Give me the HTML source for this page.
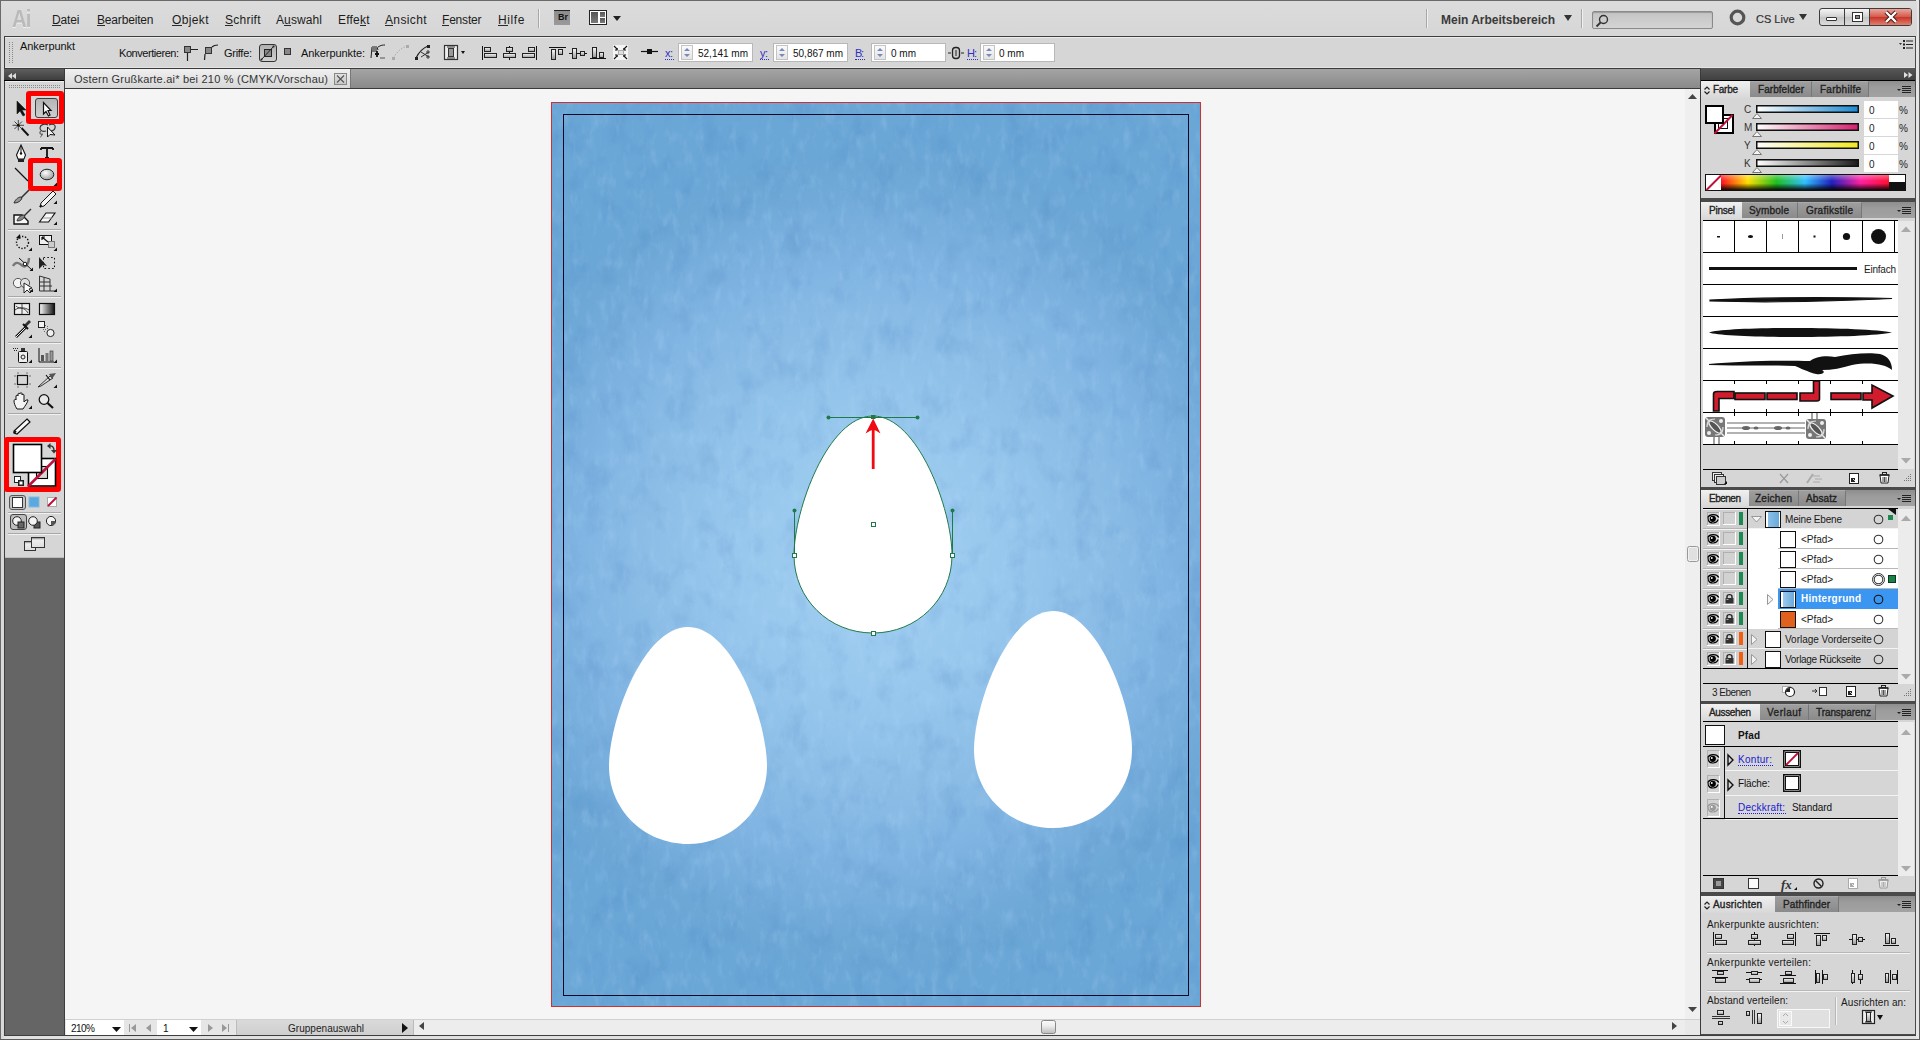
<!DOCTYPE html>
<html><head><meta charset="utf-8"><title>Illustrator</title><style>*{margin:0;padding:0;box-sizing:border-box}
html,body{width:1920px;height:1040px;overflow:hidden}
body{position:relative;background:#d8d8d8;font-family:"Liberation Sans",sans-serif}
.a{position:absolute;display:block}
.t{position:absolute;white-space:nowrap;line-height:1}
svg.a{overflow:visible}</style></head><body>
<div class="a" style="left:0px;top:0px;width:1920px;height:1040px;background:#d8d8d8;"></div>
<div class="a" style="left:0px;top:0px;width:1920px;height:1px;background:#6a6a6a;"></div>
<div class="a" style="left:0px;top:0px;width:1px;height:1040px;background:#6a6a6a;"></div>
<div class="a" style="left:1916px;top:0px;width:3px;height:1040px;background:#e6e6e6;"></div>
<div class="a" style="left:1919px;top:0px;width:1px;height:1040px;background:#5a5a5a;"></div>
<div class="a" style="left:0px;top:1039px;width:1920px;height:1px;background:#5a5a5a;"></div>
<div class="a" style="left:1px;top:1px;width:1916px;height:35px;background:linear-gradient(#dcdcdc,#d6d6d6);"></div>
<div class="t" style="left:12px;top:8px;font-size:23px;font-weight:bold;color:#bababa;letter-spacing:-1px;text-shadow:0 1px 0 #f0f0f0;transform:scaleX(0.88);transform-origin:0 0">Ai</div>
<div class="t " style="left:52px;top:14px;font-size:12px;color:#1c1c1c;letter-spacing:-0.13px;">Datei</div>
<div class="a" style="left:52px;top:25px;width:9px;height:1px;background:#2a2a2a;"></div>
<div class="t " style="left:97px;top:14px;font-size:12px;color:#1c1c1c;letter-spacing:-0.17px;">Bearbeiten</div>
<div class="a" style="left:97px;top:25px;width:8px;height:1px;background:#2a2a2a;"></div>
<div class="t " style="left:172px;top:14px;font-size:12px;color:#1c1c1c;letter-spacing:0.36px;">Objekt</div>
<div class="a" style="left:172px;top:25px;width:10px;height:1px;background:#2a2a2a;"></div>
<div class="t " style="left:225px;top:14px;font-size:12px;color:#1c1c1c;letter-spacing:0.25px;">Schrift</div>
<div class="a" style="left:225px;top:25px;width:8px;height:1px;background:#2a2a2a;"></div>
<div class="t " style="left:276px;top:14px;font-size:12px;color:#1c1c1c;letter-spacing:0.11px;">Auswahl</div>
<div class="a" style="left:284px;top:25px;width:7px;height:1px;background:#2a2a2a;"></div>
<div class="t " style="left:338px;top:14px;font-size:12px;color:#1c1c1c;letter-spacing:0.21px;">Effekt</div>
<div class="a" style="left:360px;top:25px;width:6px;height:1px;background:#2a2a2a;"></div>
<div class="t " style="left:385px;top:14px;font-size:12px;color:#1c1c1c;letter-spacing:0.36px;">Ansicht</div>
<div class="a" style="left:385px;top:25px;width:8px;height:1px;background:#2a2a2a;"></div>
<div class="t " style="left:442px;top:14px;font-size:12px;color:#1c1c1c;letter-spacing:-0.20px;">Fenster</div>
<div class="a" style="left:442px;top:25px;width:7px;height:1px;background:#2a2a2a;"></div>
<div class="t " style="left:498px;top:14px;font-size:12px;color:#1c1c1c;letter-spacing:0.62px;">Hilfe</div>
<div class="a" style="left:498px;top:25px;width:10px;height:1px;background:#2a2a2a;"></div>
<div class="a" style="left:538px;top:9px;width:1px;height:19px;background:#a8a8a8;"></div>
<div class="a" style="left:539px;top:9px;width:1px;height:19px;background:#f0f0f0;"></div>
<div class="a" style="left:554px;top:10px;width:16px;height:15px;background:linear-gradient(#8c8c8c,#9a9a9a);border-top:1.5px solid #222"></div>
<div class="t " style="left:558px;top:13px;font-size:9px;color:#111;font-weight:bold;">Br</div>
<div class="a" style="left:589px;top:10px;width:18px;height:15px;background:#fff;border:1px solid #222"></div>
<div class="a" style="left:591px;top:12px;width:7px;height:11px;background:linear-gradient(#555,#7a7a7a);"></div>
<div class="a" style="left:600px;top:12px;width:5px;height:5px;background:linear-gradient(#555,#7a7a7a);"></div>
<div class="a" style="left:600px;top:18px;width:5px;height:5px;background:linear-gradient(#555,#7a7a7a);"></div>
<svg class="a" style="left:613px;top:16px;" width="8" height="5" viewBox="0 0 8 5"><path d="M0 0H8L4 5Z" fill="#222"/></svg>
<div class="a" style="left:1426px;top:9px;width:1px;height:19px;background:#a8a8a8;"></div>
<div class="a" style="left:1427px;top:9px;width:1px;height:19px;background:#f0f0f0;"></div>
<div class="t " style="left:1441px;top:14px;font-size:12px;color:#3a3a3a;font-weight:bold;letter-spacing:-0.01px;">Mein Arbeitsbereich</div>
<svg class="a" style="left:1564px;top:15px;" width="8" height="6" viewBox="0 0 8 6"><path d="M0 0H8L4 6Z" fill="#333"/></svg>
<div class="a" style="left:1581px;top:9px;width:1px;height:19px;background:#a8a8a8;"></div>
<div class="a" style="left:1582px;top:9px;width:1px;height:19px;background:#f0f0f0;"></div>
<div class="a" style="left:1592px;top:11px;width:121px;height:18px;background:linear-gradient(#c4c4c4,#d4d4d4);border:1px solid #8a8a8a;border-radius:2px;box-shadow:inset 0 1px 1px #999"></div>
<svg class="a" style="left:1595px;top:14px;" width="14" height="14" viewBox="0 0 14 14"><circle cx="8.5" cy="5.5" r="4" fill="none" stroke="#333" stroke-width="1.4"/><path d="M5.5 8.5L1.5 12.5" stroke="#333" stroke-width="1.8"/></svg>
<svg class="a" style="left:1729px;top:9px;" width="17" height="17" viewBox="0 0 17 17"><circle cx="8.5" cy="8.5" r="6.3" fill="none" stroke="#555" stroke-width="3.2"/></svg>
<div class="t " style="left:1756px;top:14px;font-size:11px;color:#333;-webkit-text-stroke:0.2px #333">CS Live</div>
<svg class="a" style="left:1799px;top:14px;" width="8" height="6" viewBox="0 0 8 6"><path d="M0 0H8L4 6Z" fill="#333"/></svg>
<div class="a" style="left:1819px;top:8px;width:93px;height:18px;background:linear-gradient(#f4f4f4,#d0d0d0 50%,#c4c4c4 51%,#dcdcdc);border:1px solid #3c3c3c;border-radius:3px"></div>
<div class="a" style="left:1844px;top:9px;width:1px;height:16px;background:#3c3c3c;"></div>
<div class="a" style="left:1869px;top:9px;width:1px;height:16px;background:#3c3c3c;"></div>
<div class="a" style="left:1870px;top:9px;width:41px;height:16px;background:linear-gradient(#eaa69c,#d4584a 50%,#c8342a 51%,#e0806e);border-radius:0 2px 2px 0"></div>
<div class="a" style="left:1826px;top:17px;width:11px;height:4px;background:#fff;border:1px solid #333;border-radius:1px"></div>
<div class="a" style="left:1852px;top:12px;width:11px;height:10px;background:#fff;border:1px solid #333"></div>
<div class="a" style="left:1855px;top:15px;width:5px;height:4px;background:#888;border:1px solid #333"></div>
<svg class="a" style="left:1884px;top:11px;" width="14" height="12" viewBox="0 0 14 12"><path d="M2 1L12 11M12 1L2 11" stroke="#3a1a1a" stroke-width="4.2"/><path d="M2 1L12 11M12 1L2 11" stroke="#fff" stroke-width="2.4"/></svg>
<div class="a" style="left:4px;top:36px;width:1912px;height:32px;background:#d6d6d6;border-top:1px solid #3e3e3e;border-left:1px solid #3e3e3e;border-right:1px solid #4a4a4a"></div>
<div class="a" style="left:5px;top:37px;width:1910px;height:1px;background:#ececec;"></div>
<div class="a" style="left:5px;top:67px;width:1910px;height:1px;background:#e4e4e4;"></div>
<svg class="a" style="left:9px;top:42px;" width="4" height="22" viewBox="0 0 4 22"><rect x="0" y="0" width="1" height="1" fill="#888"/><rect x="0" y="2" width="1" height="1" fill="#888"/><rect x="0" y="4" width="1" height="1" fill="#888"/><rect x="0" y="6" width="1" height="1" fill="#888"/><rect x="0" y="8" width="1" height="1" fill="#888"/><rect x="0" y="10" width="1" height="1" fill="#888"/><rect x="0" y="12" width="1" height="1" fill="#888"/><rect x="0" y="14" width="1" height="1" fill="#888"/><rect x="0" y="16" width="1" height="1" fill="#888"/><rect x="0" y="18" width="1" height="1" fill="#888"/><rect x="0" y="20" width="1" height="1" fill="#888"/><rect x="3" y="0" width="1" height="1" fill="#888"/><rect x="3" y="2" width="1" height="1" fill="#888"/><rect x="3" y="4" width="1" height="1" fill="#888"/><rect x="3" y="6" width="1" height="1" fill="#888"/><rect x="3" y="8" width="1" height="1" fill="#888"/><rect x="3" y="10" width="1" height="1" fill="#888"/><rect x="3" y="12" width="1" height="1" fill="#888"/><rect x="3" y="14" width="1" height="1" fill="#888"/><rect x="3" y="16" width="1" height="1" fill="#888"/><rect x="3" y="18" width="1" height="1" fill="#888"/><rect x="3" y="20" width="1" height="1" fill="#888"/></svg>
<div class="t " style="left:20px;top:41px;font-size:11px;color:#111;letter-spacing:-0.07px;">Ankerpunkt</div>
<div class="t " style="left:119px;top:48px;font-size:11px;color:#111;letter-spacing:-0.45px;">Konvertieren:</div>
<div class="t " style="left:224px;top:48px;font-size:11px;color:#111;letter-spacing:-0.29px;">Griffe:</div>
<div class="t " style="left:301px;top:48px;font-size:11px;color:#111;letter-spacing:-0.07px;">Ankerpunkte:</div>
<div class="t " style="left:665px;top:48px;font-size:11px;color:#3030c0;letter-spacing:-0.56px;">x:</div>
<div class="a" style="left:665px;top:59px;width:9px;height:1px;background:transparent;border-bottom:1px dotted #3030c0"></div>
<div class="t " style="left:760px;top:48px;font-size:11px;color:#3030c0;letter-spacing:-0.56px;">y:</div>
<div class="a" style="left:760px;top:59px;width:9px;height:1px;background:transparent;border-bottom:1px dotted #3030c0"></div>
<div class="t " style="left:855px;top:48px;font-size:11px;color:#3030c0;letter-spacing:-1.39px;">B:</div>
<div class="a" style="left:855px;top:59px;width:10px;height:1px;background:transparent;border-bottom:1px dotted #3030c0"></div>
<div class="t " style="left:967px;top:48px;font-size:11px;color:#3030c0;letter-spacing:-1.00px;">H:</div>
<div class="a" style="left:967px;top:59px;width:11px;height:1px;background:transparent;border-bottom:1px dotted #3030c0"></div>
<div class="a" style="left:678px;top:43px;width:75px;height:19px;background:#fff;border:1px solid #b8b8b8"></div>
<div class="a" style="left:681px;top:45px;width:12px;height:15px;background:linear-gradient(#fafafa,#e4e4e4);border:1px solid #c4c4c4"></div>
<svg class="a" style="left:683px;top:47px;" width="8" height="11" viewBox="0 0 8 11"><path d="M1 4L4 1L7 4Z M1 7L4 10L7 7Z" fill="#7a8ab8"/></svg>
<div class="t " style="left:698px;top:49px;font-size:10px;color:#111;">52,141 mm</div>
<div class="a" style="left:773px;top:43px;width:75px;height:19px;background:#fff;border:1px solid #b8b8b8"></div>
<div class="a" style="left:776px;top:45px;width:12px;height:15px;background:linear-gradient(#fafafa,#e4e4e4);border:1px solid #c4c4c4"></div>
<svg class="a" style="left:778px;top:47px;" width="8" height="11" viewBox="0 0 8 11"><path d="M1 4L4 1L7 4Z M1 7L4 10L7 7Z" fill="#7a8ab8"/></svg>
<div class="t " style="left:793px;top:49px;font-size:10px;color:#111;">50,867 mm</div>
<div class="a" style="left:871px;top:43px;width:75px;height:19px;background:#fff;border:1px solid #b8b8b8"></div>
<div class="a" style="left:874px;top:45px;width:12px;height:15px;background:linear-gradient(#fafafa,#e4e4e4);border:1px solid #c4c4c4"></div>
<svg class="a" style="left:876px;top:47px;" width="8" height="11" viewBox="0 0 8 11"><path d="M1 4L4 1L7 4Z M1 7L4 10L7 7Z" fill="#7a8ab8"/></svg>
<div class="t " style="left:891px;top:49px;font-size:10px;color:#111;">0 mm</div>
<div class="a" style="left:980px;top:43px;width:75px;height:19px;background:#fff;border:1px solid #b8b8b8"></div>
<div class="a" style="left:983px;top:45px;width:12px;height:15px;background:linear-gradient(#fafafa,#e4e4e4);border:1px solid #c4c4c4"></div>
<svg class="a" style="left:985px;top:47px;" width="8" height="11" viewBox="0 0 8 11"><path d="M1 4L4 1L7 4Z M1 7L4 10L7 7Z" fill="#7a8ab8"/></svg>
<div class="t " style="left:999px;top:49px;font-size:10px;color:#111;">0 mm</div>
<svg class="a" style="left:1899px;top:40px;" width="15" height="9" viewBox="0 0 15 9"><path d="M0 3H3L1.5 5Z" fill="#333"/><rect x="4" y="0" width="2" height="2" fill="#222"/><rect x="4" y="3.5" width="2" height="2" fill="#222"/><rect x="4" y="7" width="2" height="2" fill="#222"/><rect x="7" y="0.5" width="7" height="1" fill="#222"/><rect x="7" y="4" width="7" height="1" fill="#222"/><rect x="7" y="7.5" width="7" height="1" fill="#222"/></svg>
<svg class="a" style="left:0;top:0" width="1000" height="70"><defs><linearGradient id="cbg" x1="0" y1="0" x2="0" y2="1"><stop offset="0" stop-color="#fafafa"/><stop offset="1" stop-color="#999"/></linearGradient><linearGradient id="cbsel" x1="0" y1="0" x2="0" y2="1"><stop offset="0" stop-color="#b0b0b0"/><stop offset="1" stop-color="#d0d0d0"/></linearGradient></defs><rect x="184.5" y="46.5" width="6" height="6" fill="#888" stroke="#333"/><path d="M187.5 53V61M191 49.5H198" stroke="#222" stroke-width="1.2"/><rect x="205.5" y="47.5" width="6" height="6" fill="#888" stroke="#333"/><path d="M205 54L204.5 60M212 47C214 45 216 45 218 45" stroke="#222" stroke-width="1.2" fill="none"/><rect x="259.5" y="44.5" width="17" height="17" rx="2.5" fill="url(#cbsel)" stroke="#333"/><rect x="264.5" y="49.5" width="7" height="7" fill="#888" stroke="#222"/><path d="M261 60L274 46" stroke="#222"/><circle cx="261.5" cy="59.5" r="1" fill="#222"/><circle cx="273.5" cy="46.5" r="1" fill="#222"/><rect x="284.5" y="48.5" width="6" height="6" fill="#888" stroke="#333"/><path d="M371 58L372 47H377L378 50" fill="none" stroke="#222" stroke-width="1"/><rect x="372" y="47" width="5" height="5" fill="#777"/><path d="M378 47C381 45 383 45 385 45" stroke="#222" fill="none"/><path d="M377 51V57M375 54H379" stroke="#111" stroke-width="1.8"/><path d="M380 58H385" stroke="#555"/><path d="M393 58C397 52 401 48 407 46" fill="none" stroke="#aaa" stroke-dasharray="1.5 1.5"/><rect x="392" y="57" width="3" height="3" fill="#aaa"/><rect x="406" y="45" width="3" height="3" fill="#aaa"/><path d="M416 58C419 52 423 48 428 46" fill="none" stroke="#222" stroke-width="1.2"/><rect x="415" y="57" width="3" height="3" fill="#222"/><rect x="427" y="45" width="3" height="3" fill="#222"/><path d="M421 52L429 57M421 57L429 52" stroke="#333"/><circle cx="428" cy="52" r="1.2" fill="none" stroke="#333"/><circle cx="428" cy="57" r="1.2" fill="none" stroke="#333"/><rect x="444.5" y="45.5" width="13" height="14" fill="#eee" stroke="#333" stroke-width="1.2"/><rect x="448.5" y="48.5" width="5" height="8" fill="#999" stroke="#333"/><path d="M447 47H455M447 58H455" stroke="#333"/><path d="M461 51H465L463 54Z" fill="#111"/><path d="M482.5 46V60" stroke="#111"/><rect x="484.5" y="47.5" width="6" height="4" fill="url(#cbg)" stroke="#222" stroke-width="1"/><rect x="484.5" y="53.5" width="12" height="4" fill="url(#cbg)" stroke="#222" stroke-width="1"/><path d="M509.5 46V60" stroke="#111"/><rect x="506.5" y="47.5" width="6" height="4" fill="url(#cbg)" stroke="#222" stroke-width="1"/><rect x="503.5" y="53.5" width="12" height="4" fill="url(#cbg)" stroke="#222" stroke-width="1"/><path d="M536.5 46V60" stroke="#111"/><rect x="528.5" y="47.5" width="6" height="4" fill="url(#cbg)" stroke="#222" stroke-width="1"/><rect x="522.5" y="53.5" width="12" height="4" fill="url(#cbg)" stroke="#222" stroke-width="1"/><path d="M549 47.5H566" stroke="#111"/><rect x="551.5" y="49.5" width="4" height="10" fill="url(#cbg)" stroke="#222" stroke-width="1"/><rect x="558.5" y="49.5" width="4" height="5" fill="url(#cbg)" stroke="#222" stroke-width="1"/><path d="M569 53.5H587" stroke="#111"/><rect x="572.5" y="48.5" width="4" height="10" fill="url(#cbg)" stroke="#222" stroke-width="1"/><rect x="580.5" y="51.5" width="4" height="4" fill="url(#cbg)" stroke="#222" stroke-width="1"/><path d="M590 58.5H606" stroke="#111"/><rect x="592.5" y="47.5" width="4" height="10" fill="url(#cbg)" stroke="#222" stroke-width="1"/><rect x="599.5" y="52.5" width="4" height="5" fill="url(#cbg)" stroke="#222" stroke-width="1"/><rect x="613" y="45" width="15" height="15" fill="#f4f4f4"/><g stroke="#111" stroke-width="1.1" fill="none"><path d="M614 46L617.5 49.5M627 46L623.5 49.5M614 59L617.5 55.5M627 59L623.5 55.5"/><path d="M617 48V50H615M624 48V50H626M617 57V55H615M624 57V55H626"/></g><rect x="618.5" y="50.5" width="5" height="4" fill="#e0e0e0" stroke="#aaa"/><path d="M641 51.5H658" stroke="#111" stroke-width="1.2"/><rect x="647" y="49" width="5" height="5" fill="#111"/><path d="M948 53H951M961 53H964" stroke="#222"/><rect x="952.5" y="47.5" width="7" height="11" rx="3" fill="#ccc" stroke="#222" stroke-width="1.3"/><path d="M956 50V56" stroke="#222"/></svg>
<div class="a" style="left:4px;top:68px;width:1696px;height:1px;background:#3a3a3a;"></div>
<div class="a" style="left:4px;top:69px;width:61px;height:11px;background:linear-gradient(#5e5e5e,#3e3e3e);"></div>
<div class="a" style="left:4px;top:80px;width:61px;height:1px;background:#000;"></div>
<svg class="a" style="left:8px;top:73px;" width="8" height="6" viewBox="0 0 8 6"><path d="M4 0V6L0 3Z M8 0V6L4 3Z" fill="#ddd"/></svg>
<div class="a" style="left:65px;top:69px;width:1635px;height:19px;background:linear-gradient(#a4a4a4,#8a8a8a);"></div>
<div class="a" style="left:64px;top:68px;width:1px;height:21px;background:#3a3a3a;"></div>
<div class="a" style="left:65px;top:88px;width:1635px;height:1px;background:#3a3a3a;"></div>
<div class="a" style="left:65px;top:69px;width:286px;height:19px;background:linear-gradient(#f0f0f0,#d8d8d8);border-right:1px solid #777"></div>
<div class="t " style="left:74px;top:74px;font-size:11px;color:#333;letter-spacing:0.21px;">Ostern Grußkarte.ai* bei 210 % (CMYK/Vorschau)</div>
<div class="a" style="left:334px;top:73px;width:13px;height:12px;background:linear-gradient(#e0e0e0,#c8c8c8);border:1px solid #888"></div>
<svg class="a" style="left:336px;top:75px;" width="9" height="8" viewBox="0 0 9 8"><path d="M1 0.5L8 7.5M8 0.5L1 7.5" stroke="#555" stroke-width="1.1"/></svg>
<div class="a" style="left:4px;top:81px;width:61px;height:954px;background:#656565;border-left:1px solid #3e3e3e;border-right:1px solid #3e3e3e"></div>
<div class="a" style="left:5px;top:81px;width:59px;height:477px;background:#d6d6d6;"></div>
<div class="a" style="left:5px;top:81px;width:59px;height:1px;background:#efefef;"></div>
<div class="a" style="left:5px;top:557px;width:59px;height:1px;background:#bdbdbd;"></div>
<svg class="a" style="left:0;top:0" width="70" height="560"><defs><linearGradient id="selg" x1="0" y1="0" x2="0" y2="1"><stop offset="0" stop-color="#b4b4b4"/><stop offset="1" stop-color="#cfcfcf"/></linearGradient>
<radialGradient id="ellg" cx="0.4" cy="0.35" r="0.7"><stop offset="0" stop-color="#fff"/><stop offset="1" stop-color="#999"/></radialGradient>
<linearGradient id="gradg"><stop offset="0" stop-color="#fff"/><stop offset="1" stop-color="#111"/></linearGradient>
<linearGradient id="scrg" x1="0" y1="0" x2="0" y2="1"><stop offset="0" stop-color="#777"/><stop offset="0.25" stop-color="#eee"/><stop offset="1" stop-color="#ddd"/></linearGradient></defs><rect x="9" y="85" width="1" height="1" fill="#8a8a8a"/><rect x="9" y="87" width="1" height="1" fill="#8a8a8a"/><rect x="11" y="85" width="1" height="1" fill="#8a8a8a"/><rect x="11" y="87" width="1" height="1" fill="#8a8a8a"/><rect x="13" y="85" width="1" height="1" fill="#8a8a8a"/><rect x="13" y="87" width="1" height="1" fill="#8a8a8a"/><rect x="15" y="85" width="1" height="1" fill="#8a8a8a"/><rect x="15" y="87" width="1" height="1" fill="#8a8a8a"/><rect x="17" y="85" width="1" height="1" fill="#8a8a8a"/><rect x="17" y="87" width="1" height="1" fill="#8a8a8a"/><rect x="19" y="85" width="1" height="1" fill="#8a8a8a"/><rect x="19" y="87" width="1" height="1" fill="#8a8a8a"/><rect x="21" y="85" width="1" height="1" fill="#8a8a8a"/><rect x="21" y="87" width="1" height="1" fill="#8a8a8a"/><rect x="23" y="85" width="1" height="1" fill="#8a8a8a"/><rect x="23" y="87" width="1" height="1" fill="#8a8a8a"/><rect x="25" y="85" width="1" height="1" fill="#8a8a8a"/><rect x="25" y="87" width="1" height="1" fill="#8a8a8a"/><rect x="27" y="85" width="1" height="1" fill="#8a8a8a"/><rect x="27" y="87" width="1" height="1" fill="#8a8a8a"/><rect x="29" y="85" width="1" height="1" fill="#8a8a8a"/><rect x="29" y="87" width="1" height="1" fill="#8a8a8a"/><rect x="31" y="85" width="1" height="1" fill="#8a8a8a"/><rect x="31" y="87" width="1" height="1" fill="#8a8a8a"/><rect x="33" y="85" width="1" height="1" fill="#8a8a8a"/><rect x="33" y="87" width="1" height="1" fill="#8a8a8a"/><rect x="35" y="85" width="1" height="1" fill="#8a8a8a"/><rect x="35" y="87" width="1" height="1" fill="#8a8a8a"/><rect x="37" y="85" width="1" height="1" fill="#8a8a8a"/><rect x="37" y="87" width="1" height="1" fill="#8a8a8a"/><rect x="39" y="85" width="1" height="1" fill="#8a8a8a"/><rect x="39" y="87" width="1" height="1" fill="#8a8a8a"/><rect x="41" y="85" width="1" height="1" fill="#8a8a8a"/><rect x="41" y="87" width="1" height="1" fill="#8a8a8a"/><rect x="43" y="85" width="1" height="1" fill="#8a8a8a"/><rect x="43" y="87" width="1" height="1" fill="#8a8a8a"/><rect x="45" y="85" width="1" height="1" fill="#8a8a8a"/><rect x="45" y="87" width="1" height="1" fill="#8a8a8a"/><rect x="47" y="85" width="1" height="1" fill="#8a8a8a"/><rect x="47" y="87" width="1" height="1" fill="#8a8a8a"/><rect x="49" y="85" width="1" height="1" fill="#8a8a8a"/><rect x="49" y="87" width="1" height="1" fill="#8a8a8a"/><rect x="51" y="85" width="1" height="1" fill="#8a8a8a"/><rect x="51" y="87" width="1" height="1" fill="#8a8a8a"/><rect x="53" y="85" width="1" height="1" fill="#8a8a8a"/><rect x="53" y="87" width="1" height="1" fill="#8a8a8a"/><rect x="55" y="85" width="1" height="1" fill="#8a8a8a"/><rect x="55" y="87" width="1" height="1" fill="#8a8a8a"/><rect x="57" y="85" width="1" height="1" fill="#8a8a8a"/><rect x="57" y="87" width="1" height="1" fill="#8a8a8a"/><rect x="59" y="85" width="1" height="1" fill="#8a8a8a"/><rect x="59" y="87" width="1" height="1" fill="#8a8a8a"/><rect x="35.5" y="98.5" width="22" height="19" rx="2.5" fill="url(#selg)" stroke="#3c3c3c"/><path d="M17 101L17 114L20 111L23 116L25 115L22 110L26 110Z" fill="#111" stroke="#222" stroke-width="0.6"/><path d="M43.5 102.5L43.5 114L46 111.5L48.5 116L50 115L48 110.5L51 110.5Z" fill="#fff" stroke="#111" stroke-width="1.2"/><path d="M21.5 128L28.5 135.5" stroke="#111" stroke-width="1.9"/><g stroke="#333" stroke-width="0.9"><path d="M18.3 120V130.5M12.5 125.3H24M14.5 121.5L22 129M22 121.5L14.5 129"/></g><circle cx="18.3" cy="125.3" r="1.3" fill="#111"/><path d="M48 125C44 123 40 125 40 128C40 131 43 132 46 131M49 125C53 123 56 125 55 128C54.5 130 52 131 50 131" fill="none" stroke="#333" stroke-width="1.1"/><path d="M40.5 131C39.5 133 40 135 42 134C43 133 41.5 136.5 40.5 137" fill="none" stroke="#333" stroke-width="1"/><path d="M47.5 127V137L50 134.5L55 135Z" fill="#eee" stroke="#111" stroke-width="1"/><rect x="8" y="141" width="53" height="1" fill="#a8a8a8"/><rect x="8" y="142" width="53" height="1" fill="#f2f2f2"/><path d="M21 145L25.5 155L24 159H18L16.5 155Z" fill="#fff" stroke="#111" stroke-width="1.1"/><path d="M21 146V153" stroke="#111"/><circle cx="21" cy="153.5" r="1.2" fill="#111"/><rect x="18" y="159" width="6" height="3" fill="#222"/><path d="M41 148H53M41 148V150M53 148V150M47 148V158M45 158H49" stroke="#111" stroke-width="1.8" fill="none"/><path d="M15 168L28 181" stroke="#111" stroke-width="1.2"/><ellipse cx="47" cy="174.5" rx="6.8" ry="5.3" fill="url(#ellg)" stroke="#222" stroke-width="1"/><path d="M57 186h-3.5l3.5-3.5z" fill="#111"/><path d="M29 190L20 199" stroke="#333" stroke-width="1.6"/><path d="M21 197C18 197 15 200 14 203C18 203 21 201 22 198Z" fill="#999" stroke="#222" stroke-width="0.9"/><path d="M53 191L56 194L44 206L40 207L41 203Z" fill="#f4f4f4" stroke="#111" stroke-width="1"/><path d="M40 207L41.5 205" stroke="#111" stroke-width="1.5"/><path d="M57 204h-3.5l3.5-3.5z" fill="#111"/><path d="M14 215H22L28 221V224H14Z" fill="#f6f6f6" stroke="#111" stroke-width="1.4"/><path d="M31 209L23 217" stroke="#333" stroke-width="1.4"/><path d="M24 215C20 215 17 219 17 221C21 221 24 219 25 216Z" fill="#888" stroke="#222" stroke-width="0.8"/><path d="M39.5 222L46 213H55L48.5 222Z" fill="#f8f8f8" stroke="#111" stroke-width="1.1"/><path d="M43 218H52" stroke="#999"/><path d="M57 225h-3.5l3.5-3.5z" fill="#111"/><rect x="8" y="229" width="53" height="1" fill="#a8a8a8"/><rect x="8" y="230" width="53" height="1" fill="#f2f2f2"/><circle cx="22.5" cy="242.5" r="6" fill="none" stroke="#111" stroke-width="1.4" stroke-dasharray="1.4 1.6"/><path d="M16 238L20 234L20.5 239Z" fill="#111"/><path d="M32 251h-3.5l3.5-3.5z" fill="#111"/><rect x="39.5" y="235.5" width="12" height="9" fill="#f0f0f0" stroke="#111"/><rect x="48.5" y="241.5" width="6" height="6" fill="#ccc" stroke="#777"/><path d="M42 237L48 242M42 237v3M42 237h3" stroke="#111" stroke-width="1.2" fill="none"/><path d="M57 251h-3.5l3.5-3.5z" fill="#111"/><path d="M13 266C16 260 20 264 23 266C26 268 29 263 29 258" fill="none" stroke="#777" stroke-width="2.4"/><path d="M19 258L32 270" stroke="#111" stroke-width="1"/><circle cx="25" cy="264" r="1.8" fill="#fff" stroke="#111"/><path d="M33 271h-3.5l3.5-3.5z" fill="#111"/><rect x="43.5" y="257.5" width="11" height="11" fill="none" stroke="#111" stroke-dasharray="1.6 2.2"/><path d="M39 257V269L43 265L47 266Z" fill="#222"/><circle cx="18" cy="283" r="4.6" fill="#f4f4f4" stroke="#555"/><circle cx="25" cy="283" r="4.6" fill="#e0e0e0" stroke="#555"/><path d="M24 283V293L27 290L30 293L31 292L29 289L32 288Z" fill="#fff" stroke="#111" stroke-width="0.9"/><path d="M33 292h-3.5l3.5-3.5z" fill="#111"/><path d="M39.5 276V291H56M39.5 276L50 279V291M44 277.5V291M39.5 282H50M39.5 286H52" fill="none" stroke="#333" stroke-width="1"/><path d="M57 292h-3.5l3.5-3.5z" fill="#111"/><rect x="8" y="296" width="53" height="1" fill="#a8a8a8"/><rect x="8" y="297" width="53" height="1" fill="#f2f2f2"/><rect x="14.5" y="303.5" width="15" height="11" fill="#f0f0f0" stroke="#111" stroke-width="1.2"/><path d="M15 310C19 307 24 307 29 310M22 304V314M16 306C20 310 24 306 28 313" fill="none" stroke="#333" stroke-width="0.9"/><rect x="39.5" y="303.5" width="15" height="11" fill="url(#gradg)" stroke="#111" stroke-width="1.2"/><path d="M16 337L26 327" stroke="#111" stroke-width="2.6"/><path d="M16 337L26 327" stroke="#eee" stroke-width="1"/><path d="M24 325L29 320L31 322L26 327Z" fill="#333"/><path d="M23 324L28 329" stroke="#111" stroke-width="2"/><path d="M32 338h-3.5l3.5-3.5z" fill="#111"/><rect x="38.5" y="321.5" width="6" height="6" fill="#f2f2f2" stroke="#222"/><circle cx="50.5" cy="333" r="3.6" fill="#f0f0f0" stroke="#222"/><g fill="#666"><rect x="45" y="325" width="1" height="1"/><rect x="47" y="326" width="1" height="1"/><rect x="43" y="329" width="1" height="1"/><rect x="45" y="329" width="1" height="1"/><rect x="47" y="328" width="1" height="1"/><rect x="44" y="331" width="1" height="1"/></g><rect x="8" y="342" width="53" height="1" fill="#a8a8a8"/><rect x="8" y="343" width="53" height="1" fill="#f2f2f2"/><rect x="18.5" y="351.5" width="9" height="11" rx="1" fill="#eee" stroke="#111"/><rect x="21" y="348" width="4" height="3" fill="#333"/><circle cx="23" cy="357" r="2" fill="none" stroke="#222"/><g fill="#222"><rect x="13" y="348" width="1" height="1"/><rect x="15" y="348" width="1" height="1"/><rect x="17" y="348" width="1" height="1"/><rect x="14" y="350" width="1" height="1"/><rect x="16" y="350" width="1" height="1"/></g><path d="M32 363h-3.5l3.5-3.5z" fill="#111"/><path d="M39 348V362H54" fill="none" stroke="#111" stroke-width="1"/><rect x="41" y="355" width="3" height="6" fill="#555"/><rect x="45.5" y="353" width="3" height="8" fill="#777"/><rect x="50" y="351" width="3" height="10" fill="#999" stroke="#333" stroke-width="0.6"/><path d="M57 363h-3.5l3.5-3.5z" fill="#111"/><rect x="8" y="367" width="53" height="1" fill="#a8a8a8"/><rect x="8" y="368" width="53" height="1" fill="#f2f2f2"/><rect x="17.5" y="375.5" width="10" height="9" fill="none" stroke="#111" stroke-width="1.2"/><path d="M14 376h2M14 384h2M29 376h2M29 384h2M18 372v2M27 372v2M18 386v2M27 386v2" stroke="#777"/><path d="M38 387L50 376L53 378L41 386Z" fill="#ddd" stroke="#222" stroke-width="0.9"/><path d="M49 374L56 373L52 379Z" fill="#555"/><path d="M46 375L50 380" stroke="#111" stroke-width="1.2"/><path d="M57 388h-3.5l3.5-3.5z" fill="#111"/><path d="M16 400V396C16 395 18 395 18 396V394C18 393 20 393 20 394V393.5C20 392.5 22 392.5 22 393.5V395C22 394 24 394 24 395V402C25 401 27 399 28 400C28 402 25 406 23 409H17C15 406 14 403 14 401C14 399 16 399 16 400Z" fill="#f4f4f4" stroke="#111" stroke-width="1"/><path d="M32 409h-3.5l3.5-3.5z" fill="#111"/><circle cx="44" cy="399.5" r="4.8" fill="#e8e8e8" stroke="#111" stroke-width="1.3"/><path d="M47.5 403L53 408" stroke="#111" stroke-width="2.2"/><rect x="8" y="413" width="53" height="1" fill="#a8a8a8"/><rect x="8" y="414" width="53" height="1" fill="#f2f2f2"/><path d="M27 419L30 422L17 434L14 433L14 431Z" fill="#fafafa" stroke="#111" stroke-width="1.2"/><path d="M14 433L16 431" stroke="#111" stroke-width="2"/><rect x="6.5" y="439.5" width="52" height="50" rx="0.8" fill="none" stroke="#ff0000" stroke-width="5"/><rect x="28.5" y="458.5" width="27" height="27.5" fill="#fff" stroke="#000" stroke-width="1.6"/><rect x="36.5" y="466.5" width="11" height="12" fill="#d6d6d6" stroke="#000" stroke-width="1.1"/><path d="M28 486.5L55.5 459" stroke="#c0103a" stroke-width="2.5"/><rect x="13.5" y="444.5" width="28" height="28" fill="#fff" stroke="#000" stroke-width="1.6"/><path d="M49.5 446C52.5 445.5 54 447.5 54 450.5" fill="none" stroke="#333" stroke-width="1.4"/><path d="M47 446L50.5 443V449Z" fill="#333"/><path d="M51 450H57L54 453.5Z" fill="#333"/><rect x="14.5" y="476.5" width="6" height="6" fill="#fff" stroke="#222"/><rect x="18" y="480" width="6" height="6" fill="#222"/><rect x="19.5" y="481.5" width="3" height="3" fill="#fff"/><rect x="9.5" y="495.5" width="16" height="14" rx="2.5" fill="#c4c4c4" stroke="#555"/><rect x="12.5" y="497.5" width="10" height="10" fill="#fff" stroke="#333"/><rect x="29" y="497" width="10" height="10" fill="#5aa8e0" stroke="#8ab8d8"/><rect x="47.5" y="497.5" width="9" height="9" fill="#fff" stroke="#aaa"/><path d="M48 506L56.5 497.5" stroke="#c0103a" stroke-width="2"/><rect x="8" y="512" width="53" height="1" fill="#a8a8a8"/><rect x="8" y="513" width="53" height="1" fill="#f2f2f2"/><rect x="10.5" y="514.5" width="16" height="15" rx="2.5" fill="#bcbcbc" stroke="#444"/><circle cx="17" cy="521" r="4.3" fill="#f4f4f4" stroke="#222"/><rect x="18" y="522" width="6" height="6" fill="#666" stroke="#222"/><rect x="34" y="522" width="6" height="6" fill="#555" stroke="#222"/><circle cx="33" cy="521" r="4.3" fill="#f4f4f4" stroke="#222"/><circle cx="51" cy="521" r="4.6" fill="#f4f4f4" stroke="#222"/><path d="M51 521H55.6A4.6 4.6 0 0 1 51 525.6Z" fill="#555"/><rect x="8" y="533" width="53" height="1" fill="#a8a8a8"/><rect x="8" y="534" width="53" height="1" fill="#f2f2f2"/><rect x="24.5" y="541.5" width="11" height="9" fill="url(#scrg)" stroke="#333"/><rect x="31.5" y="537.5" width="13" height="10" fill="url(#scrg)" stroke="#333"/><rect x="28.5" y="93.5" width="33" height="28" rx="0.8" fill="none" stroke="#ff0000" stroke-width="5"/><rect x="30.5" y="160.5" width="29" height="28" rx="0.8" fill="none" stroke="#ff0000" stroke-width="5"/></svg>
<div class="a" style="left:65px;top:89px;width:1620px;height:930px;background:#f5f5f5;"></div>
<svg class="a" style="left:540px;top:90px;" width="680" height="925" viewBox="0 0 680 925"><defs>
<radialGradient id="bg" cx="333" cy="470" r="420" gradientUnits="userSpaceOnUse">
<stop offset="0" stop-color="#a2cff3"/><stop offset="0.26" stop-color="#9ac9ee"/><stop offset="0.36" stop-color="#96c6ec"/><stop offset="0.62" stop-color="#86b9e4"/><stop offset="0.70" stop-color="#80b4e2"/><stop offset="0.93" stop-color="#6ca7d6"/><stop offset="1" stop-color="#6aa6d6"/></radialGradient>
<filter id="tx" x="0" y="0" width="100%" height="100%" color-interpolation-filters="sRGB"><feTurbulence type="fractalNoise" baseFrequency="0.045 0.03" numOctaves="5" seed="11"/><feColorMatrix values="0 0 0 0 0.2  0 0 0 0 0.42  0 0 0 0 0.7  1.8 0 0 0 -0.9"/></filter>
<filter id="tx2" x="0" y="0" width="100%" height="100%" color-interpolation-filters="sRGB"><feTurbulence type="fractalNoise" baseFrequency="0.12 0.05" numOctaves="4" seed="3"/><feColorMatrix values="0 0 0 0 0.75  0 0 0 0 0.88  0 0 0 0 1  0 1.8 0 0 -0.92"/></filter>
</defs>
<rect x="11.5" y="12.5" width="649" height="904" fill="url(#bg)" stroke="#d03030" stroke-width="1"/>
<rect x="12" y="13" width="648" height="903" fill="#000" filter="url(#tx)" opacity="0.2"/><rect x="12" y="13" width="648" height="903" fill="#000" filter="url(#tx2)" opacity="0.25"/>
<rect x="23.5" y="24.5" width="625" height="881" fill="none" stroke="#0a0a28" stroke-width="1"/>
<g transform="translate(-540 -90)" fill="#fff">
<path d="M873 416C918 416 952 510 952 555C952 599 917 633 873 633C829 633 794 599 794 555C794 510 828 416 873 416Z" stroke="#1f7a4a" stroke-width="1"/>
<path d="M688 627C733 627 767 721 767 766C767 810 732 844 688 844C644 844 609 810 609 766C609 721 643 627 688 627Z"/>
<path d="M1053 611C1098 611 1132 705 1132 750C1132 794 1097 828 1053 828C1009 828 974 794 974 750C974 705 1008 611 1053 611Z"/>
</g></svg>
<svg class="a" style="left:0;top:0" width="1920" height="1040"><g stroke="#1f7a4a" stroke-width="1" fill="none">
<path d="M828.5 417.5H917.5"/><path d="M794.5 510.5V555.5"/><path d="M952.5 510.5V555.5"/>
</g>
<g fill="#1f7a4a"><circle cx="828.5" cy="417.5" r="2"/><circle cx="917.5" cy="417.5" r="2"/><circle cx="794.5" cy="510.5" r="2"/><circle cx="952.5" cy="510.5" r="2"/>
<rect x="871" y="415" width="4.5" height="4"/></g>
<g fill="#fff" stroke="#1f7a4a" stroke-width="1"><rect x="792.5" y="553.5" width="4" height="4"/><rect x="950.5" y="553.5" width="4" height="4"/><rect x="871.5" y="631.5" width="4" height="4"/><rect x="871.5" y="522.5" width="4" height="4"/></g>
<path d="M873.2 469V428" stroke="#f00a14" stroke-width="2.8"/><path d="M873.2 418.5L880.5 433.5C877 431 875 430 873.2 430C871.4 430 869.4 431 865.5 433.5Z" fill="#f00a14"/></svg>
<div class="a" style="left:1685px;top:89px;width:15px;height:930px;background:#efefef;"></div>
<svg class="a" style="left:1687px;top:546px;" width="12" height="16" viewBox="0 0 12 16"><rect x="0.5" y="0.5" width="11" height="15" rx="2" fill="#f0f0f0" stroke="#999"/><rect x="2" y="2" width="8" height="12" fill="#e0e0e0"/></svg>
<svg class="a" style="left:1688px;top:93px;" width="9" height="7" viewBox="0 0 9 7"><path d="M0 6L4.5 1L9 6Z" fill="#444"/></svg>
<svg class="a" style="left:1688px;top:1006px;" width="9" height="7" viewBox="0 0 9 7"><path d="M0 1L4.5 6L9 1Z" fill="#444"/></svg>
<div class="a" style="left:65px;top:1019px;width:1635px;height:16px;background:#e8e8e8;border-top:1px solid #d0d0d0"></div>
<div class="a" style="left:66px;top:1020px;width:58px;height:15px;background:#fff;"></div>
<div class="t " style="left:71px;top:1024px;font-size:10px;color:#111;letter-spacing:-0.52px;">210%</div>
<svg class="a" style="left:112px;top:1027px;" width="9" height="5" viewBox="0 0 9 5"><path d="M0 0H9L4.5 5Z" fill="#111"/></svg>
<div class="a" style="left:124px;top:1020px;width:33px;height:15px;background:#e6e6e6;"></div>
<svg class="a" style="left:129px;top:1024px;" width="8" height="9" viewBox="0 0 8 9"><rect x="0" y="0" width="1" height="8" fill="#999"/><path d="M7 0V8L2 4Z" fill="#999"/></svg>
<svg class="a" style="left:146px;top:1024px;" width="6" height="9" viewBox="0 0 6 9"><path d="M5 0V8L0 4Z" fill="#999"/></svg>
<div class="a" style="left:157px;top:1020px;width:44px;height:15px;background:#fff;"></div>
<div class="t " style="left:163px;top:1024px;font-size:10px;color:#111;">1</div>
<svg class="a" style="left:189px;top:1027px;" width="9" height="5" viewBox="0 0 9 5"><path d="M0 0H9L4.5 5Z" fill="#111"/></svg>
<div class="a" style="left:201px;top:1020px;width:34px;height:15px;background:#e6e6e6;"></div>
<svg class="a" style="left:208px;top:1024px;" width="6" height="9" viewBox="0 0 6 9"><path d="M0 0V8L5 4Z" fill="#999"/></svg>
<svg class="a" style="left:222px;top:1024px;" width="8" height="9" viewBox="0 0 8 9"><path d="M0 0V8L5 4Z" fill="#999"/><rect x="6" y="0" width="1" height="8" fill="#999"/></svg>
<div class="a" style="left:236px;top:1020px;width:178px;height:15px;background:linear-gradient(#dadada,#cfcfcf);border-left:1px solid #bbb;border-right:1px solid #bbb"></div>
<div class="t " style="left:288px;top:1024px;font-size:10px;color:#222;letter-spacing:0.03px;">Gruppenauswahl</div>
<svg class="a" style="left:402px;top:1023px;" width="7" height="10" viewBox="0 0 7 10"><path d="M0 0V10L6 5Z" fill="#111"/></svg>
<div class="a" style="left:414px;top:1020px;width:1271px;height:15px;background:#ededed;"></div>
<svg class="a" style="left:419px;top:1022px;" width="6" height="9" viewBox="0 0 6 9"><path d="M5 0V8L0 4Z" fill="#444"/></svg>
<svg class="a" style="left:1672px;top:1022px;" width="6" height="9" viewBox="0 0 6 9"><path d="M0 0V8L5 4Z" fill="#444"/></svg>
<svg class="a" style="left:1041px;top:1020px;" width="16" height="15" viewBox="0 0 16 15"><defs><linearGradient id="thg" x1="0" y1="0" x2="0" y2="1"><stop offset="0" stop-color="#fafafa"/><stop offset="0.4" stop-color="#eee"/><stop offset="1" stop-color="#bbb"/></linearGradient></defs><rect x="0.5" y="0.5" width="14" height="13" rx="2" fill="url(#thg)" stroke="#888"/></svg>
<div class="a" style="left:4px;top:1035px;width:1912px;height:1px;background:#3e3e3e;"></div>
<div class="a" style="left:4px;top:1036px;width:1912px;height:3px;background:#e0e0e0;"></div>
<div class="a" style="left:1700px;top:68px;width:1px;height:967px;background:#3a3a3a;"></div>
<div class="a" style="left:1701px;top:68px;width:215px;height:967px;background:#4a4a4a;"></div>
<div class="a" style="left:1701px;top:68px;width:214px;height:12px;background:linear-gradient(#585858,#404040);"></div>
<div class="a" style="left:1701px;top:80px;width:214px;height:1px;background:#000;"></div>
<svg class="a" style="left:1904px;top:72px;" width="9" height="6" viewBox="0 0 9 6"><path d="M0 0V6L4 3Z M4.5 0V6L8.5 3Z" fill="#e0e0e0"/></svg>
<div class="a" style="left:1701px;top:81px;width:214px;height:117px;background:#d6d6d6;"></div>
<div class="a" style="left:1701px;top:81px;width:214px;height:16px;background:linear-gradient(#8e8e8e,#9c9c9c 40%,#a2a2a2);"></div>
<div class="a" style="left:1701px;top:81px;width:49px;height:17px;background:linear-gradient(#f0f0f0,#d8d8d8);"></div>
<div class="a" style="left:1750px;top:81px;width:62px;height:16px;background:linear-gradient(#9e9e9e,#8a8a8a);border-right:1px solid #777;border-top:1px solid #aaa"></div>
<div class="a" style="left:1812px;top:81px;width:57px;height:16px;background:linear-gradient(#9e9e9e,#8a8a8a);border-right:1px solid #777;border-top:1px solid #aaa"></div>
<svg class="a" style="left:1704px;top:86px;" width="6" height="9" viewBox="0 0 6 9"><path d="M0.5 3.5L3 1L5.5 3.5M0.5 5.5L3 8L5.5 5.5" fill="none" stroke="#222" stroke-width="1.2"/></svg>
<div class="t " style="left:1713px;top:85px;font-size:10px;color:#222;letter-spacing:-0.28px;-webkit-text-stroke:0.35px #222">Farbe</div>
<div class="t " style="left:1758px;top:85px;font-size:10px;color:#222;letter-spacing:0.05px;-webkit-text-stroke:0.35px #222">Farbfelder</div>
<div class="t " style="left:1820px;top:85px;font-size:10px;color:#222;letter-spacing:0.26px;-webkit-text-stroke:0.35px #222">Farbhilfe</div>
<svg class="a" style="left:1897px;top:86px;" width="15" height="8" viewBox="0 0 15 8"><path d="M0 3H4L2 5Z" fill="#222"/><rect x="5" y="0" width="9" height="1" fill="#222"/><rect x="5" y="2" width="9" height="1" fill="#222"/><rect x="5" y="4" width="9" height="1" fill="#222"/><rect x="5" y="6" width="9" height="1" fill="#222"/></svg>
<svg class="a" style="left:1704px;top:104px;" width="31" height="31" viewBox="0 0 31 31"><rect x="11" y="11" width="18" height="18" fill="#fff" stroke="#000" stroke-width="2"/><rect x="14.5" y="14.5" width="9" height="10" fill="none" stroke="#111"/><path d="M10.5 29.5L28.5 11" stroke="#c0103a" stroke-width="2"/><rect x="2" y="2" width="17" height="17" fill="#fff" stroke="#000" stroke-width="2"/></svg>
<div class="t " style="left:1744px;top:105px;font-size:10px;color:#333;">C</div>
<svg class="a" style="left:1756px;top:105px;" width="103" height="8" viewBox="0 0 103 8"><defs><linearGradient id="gC"><stop offset="0" stop-color="#fff"/><stop offset="1" stop-color="#1a8ad4"/></linearGradient></defs><rect x="0.75" y="0.75" width="101.5" height="6.5" fill="url(#gC)" stroke="#111" stroke-width="1.5"/></svg>
<svg class="a" style="left:1752px;top:113px;" width="10" height="6" viewBox="0 0 10 6"><path d="M0.5 5.5L5 0.5L9.5 5.5Z" fill="#f4f4f4" stroke="#777"/></svg>
<div class="a" style="left:1864px;top:101px;width:34px;height:17px;background:#fff;"></div>
<div class="t " style="left:1869px;top:106px;font-size:10px;color:#222;">0</div>
<div class="t " style="left:1899px;top:106px;font-size:10px;color:#222;">%</div>
<div class="t " style="left:1744px;top:123px;font-size:10px;color:#333;">M</div>
<svg class="a" style="left:1756px;top:123px;" width="103" height="8" viewBox="0 0 103 8"><defs><linearGradient id="gM"><stop offset="0" stop-color="#fff"/><stop offset="1" stop-color="#d4206e"/></linearGradient></defs><rect x="0.75" y="0.75" width="101.5" height="6.5" fill="url(#gM)" stroke="#111" stroke-width="1.5"/></svg>
<svg class="a" style="left:1752px;top:131px;" width="10" height="6" viewBox="0 0 10 6"><path d="M0.5 5.5L5 0.5L9.5 5.5Z" fill="#f4f4f4" stroke="#777"/></svg>
<div class="a" style="left:1864px;top:119px;width:34px;height:17px;background:#fff;"></div>
<div class="t " style="left:1869px;top:124px;font-size:10px;color:#222;">0</div>
<div class="t " style="left:1899px;top:124px;font-size:10px;color:#222;">%</div>
<div class="t " style="left:1744px;top:141px;font-size:10px;color:#333;">Y</div>
<svg class="a" style="left:1756px;top:141px;" width="103" height="8" viewBox="0 0 103 8"><defs><linearGradient id="gY"><stop offset="0" stop-color="#fff"/><stop offset="1" stop-color="#f0e820"/></linearGradient></defs><rect x="0.75" y="0.75" width="101.5" height="6.5" fill="url(#gY)" stroke="#111" stroke-width="1.5"/></svg>
<svg class="a" style="left:1752px;top:149px;" width="10" height="6" viewBox="0 0 10 6"><path d="M0.5 5.5L5 0.5L9.5 5.5Z" fill="#f4f4f4" stroke="#777"/></svg>
<div class="a" style="left:1864px;top:137px;width:34px;height:17px;background:#fff;"></div>
<div class="t " style="left:1869px;top:142px;font-size:10px;color:#222;">0</div>
<div class="t " style="left:1899px;top:142px;font-size:10px;color:#222;">%</div>
<div class="t " style="left:1744px;top:159px;font-size:10px;color:#333;">K</div>
<svg class="a" style="left:1756px;top:159px;" width="103" height="8" viewBox="0 0 103 8"><defs><linearGradient id="gK"><stop offset="0" stop-color="#fff"/><stop offset="1" stop-color="#1a1a1a"/></linearGradient></defs><rect x="0.75" y="0.75" width="101.5" height="6.5" fill="url(#gK)" stroke="#111" stroke-width="1.5"/></svg>
<svg class="a" style="left:1752px;top:167px;" width="10" height="6" viewBox="0 0 10 6"><path d="M0.5 5.5L5 0.5L9.5 5.5Z" fill="#f4f4f4" stroke="#777"/></svg>
<div class="a" style="left:1864px;top:155px;width:34px;height:17px;background:#fff;"></div>
<div class="t " style="left:1869px;top:160px;font-size:10px;color:#222;">0</div>
<div class="t " style="left:1899px;top:160px;font-size:10px;color:#222;">%</div>
<svg class="a" style="left:1705px;top:174px;" width="201" height="17" viewBox="0 0 201 17"><defs><linearGradient id="sp"><stop offset="0" stop-color="#ff1020"/><stop offset="0.16" stop-color="#ffe000"/><stop offset="0.33" stop-color="#20c020"/><stop offset="0.5" stop-color="#30c0ff"/><stop offset="0.66" stop-color="#2020c0"/><stop offset="0.83" stop-color="#ff20a0"/><stop offset="1" stop-color="#ff1030"/></linearGradient>
<linearGradient id="spd" x1="0" y1="0" x2="0" y2="1"><stop offset="0" stop-color="#fff" stop-opacity="0.35"/><stop offset="0.4" stop-color="#fff" stop-opacity="0"/><stop offset="0.55" stop-color="#000" stop-opacity="0"/><stop offset="1" stop-color="#000" stop-opacity="0.9"/></linearGradient></defs>
<rect x="0" y="0" width="201" height="17" fill="#111"/><rect x="1" y="1" width="15" height="15" fill="#fff"/><path d="M1.5 16L16 1.5" stroke="#c0103a" stroke-width="2"/>
<rect x="16" y="1" width="168" height="15" fill="url(#sp)"/><rect x="16" y="1" width="168" height="15" fill="url(#spd)"/><rect x="184" y="1" width="16" height="7" fill="#fff"/></svg>
<div class="a" style="left:1701px;top:198px;width:214px;height:4px;background:#4a4a4a;"></div>
<div class="a" style="left:1701px;top:202px;width:214px;height:285px;background:#d6d6d6;"></div>
<div class="a" style="left:1701px;top:202px;width:214px;height:16px;background:linear-gradient(#8e8e8e,#9c9c9c 40%,#a2a2a2);"></div>
<div class="a" style="left:1701px;top:202px;width:41px;height:17px;background:linear-gradient(#f0f0f0,#d8d8d8);"></div>
<div class="a" style="left:1742px;top:202px;width:56px;height:16px;background:linear-gradient(#9e9e9e,#8a8a8a);border-right:1px solid #777;border-top:1px solid #aaa"></div>
<div class="a" style="left:1798px;top:202px;width:64px;height:16px;background:linear-gradient(#9e9e9e,#8a8a8a);border-right:1px solid #777;border-top:1px solid #aaa"></div>
<div class="t " style="left:1709px;top:206px;font-size:10px;color:#222;letter-spacing:-0.25px;-webkit-text-stroke:0.35px #222">Pinsel</div>
<div class="t " style="left:1749px;top:206px;font-size:10px;color:#222;letter-spacing:0.18px;-webkit-text-stroke:0.35px #222">Symbole</div>
<div class="t " style="left:1806px;top:206px;font-size:10px;color:#222;letter-spacing:0.25px;-webkit-text-stroke:0.35px #222">Grafikstile</div>
<svg class="a" style="left:1897px;top:207px;" width="15" height="8" viewBox="0 0 15 8"><path d="M0 3H4L2 5Z" fill="#222"/><rect x="5" y="0" width="9" height="1" fill="#222"/><rect x="5" y="2" width="9" height="1" fill="#222"/><rect x="5" y="4" width="9" height="1" fill="#222"/><rect x="5" y="6" width="9" height="1" fill="#222"/></svg>
<div class="a" style="left:1703px;top:220px;width:195px;height:1px;background:#000;"></div>
<div class="a" style="left:1703px;top:221px;width:195px;height:248px;background:#fff;"></div>
<div class="a" style="left:1703px;top:445px;width:195px;height:24px;background:#d6d6d6;"></div>
<div class="a" style="left:1898px;top:221px;width:16px;height:248px;background:#e8e8e8;"></div>
<svg class="a" style="left:1901px;top:226px;" width="10" height="6" viewBox="0 0 10 6"><path d="M0 6L5 0.5L10 6Z" fill="#aaa"/></svg>
<svg class="a" style="left:1901px;top:458px;" width="10" height="6" viewBox="0 0 10 6"><path d="M0 0L5 5.5L10 0Z" fill="#aaa"/></svg>
<div class="t " style="left:1864px;top:265px;font-size:10px;color:#1a1a1a;letter-spacing:-0.23px;">Einfach</div>
<svg class="a" style="left:0;top:0" width="1920" height="1040"><rect x="1734" y="221" width="1" height="31" fill="#000"/><rect x="1766" y="221" width="1" height="31" fill="#000"/><rect x="1798" y="221" width="1" height="31" fill="#000"/><rect x="1830" y="221" width="1" height="31" fill="#000"/><rect x="1862" y="221" width="1" height="31" fill="#000"/><rect x="1894" y="221" width="1" height="31" fill="#000"/><rect x="1703" y="252" width="195" height="1" fill="#000"/><rect x="1703" y="284" width="195" height="1" fill="#000"/><rect x="1703" y="316" width="195" height="1" fill="#000"/><rect x="1703" y="348" width="195" height="1" fill="#000"/><rect x="1703" y="380" width="195" height="1" fill="#000"/><rect x="1703" y="412" width="195" height="1" fill="#000"/><rect x="1703" y="444" width="195" height="1" fill="#000"/><rect x="1734" y="381" width="1" height="3" fill="#000"/><rect x="1734" y="409" width="1" height="3" fill="#000"/><rect x="1734" y="413" width="1" height="3" fill="#000"/><rect x="1734" y="441" width="1" height="3" fill="#000"/><rect x="1766" y="381" width="1" height="3" fill="#000"/><rect x="1766" y="409" width="1" height="3" fill="#000"/><rect x="1766" y="413" width="1" height="3" fill="#000"/><rect x="1766" y="441" width="1" height="3" fill="#000"/><rect x="1798" y="381" width="1" height="3" fill="#000"/><rect x="1798" y="409" width="1" height="3" fill="#000"/><rect x="1798" y="413" width="1" height="3" fill="#000"/><rect x="1798" y="441" width="1" height="3" fill="#000"/><rect x="1830" y="381" width="1" height="3" fill="#000"/><rect x="1830" y="409" width="1" height="3" fill="#000"/><rect x="1830" y="413" width="1" height="3" fill="#000"/><rect x="1830" y="441" width="1" height="3" fill="#000"/><rect x="1862" y="381" width="1" height="3" fill="#000"/><rect x="1862" y="409" width="1" height="3" fill="#000"/><rect x="1862" y="413" width="1" height="3" fill="#000"/><rect x="1862" y="441" width="1" height="3" fill="#000"/><rect x="1717" y="236" width="3" height="1.5" fill="#111"/><ellipse cx="1750.5" cy="236.5" rx="2.6" ry="1.5" fill="#111"/><rect x="1782" y="234" width="1" height="5" fill="#999"/><rect x="1813.5" y="235.5" width="2" height="2" fill="#111"/><circle cx="1846.5" cy="236.5" r="3.6" fill="#111"/><circle cx="1878.5" cy="236.5" r="7.5" fill="#111"/><rect x="1709" y="267" width="148" height="3" fill="#111"/><path d="M1710 300C1760 297.5 1830 297 1892 298.5C1830 301.5 1760 302.5 1710 301Z" fill="#111" stroke="#111" stroke-width="1.2"/><path d="M1709 332.5C1725 326.5 1865 326.5 1892 332.5C1865 338.5 1725 338.5 1709 332.5Z" fill="#111"/><path d="M1709 364C1740 361 1780 360 1810 361C1815 357 1825 355 1835 357C1850 354 1868 352 1880 354C1888 356 1892 362 1892 370C1885 364 1870 362 1852 365C1842 368 1832 370 1822 370C1826 372 1823 375 1816 374C1808 372 1800 368 1795 366C1770 365 1740 366 1709 365Z" fill="#111"/><path d="M1798 365C1802 362 1808 363 1812 366" fill="none" stroke="#111" stroke-width="3"/><g fill="#d01c2c" stroke="#111" stroke-width="1.6"><path d="M1713.5 411V394C1713.5 392 1715 391.5 1717 391.5H1734V398.5H1719V411Z"/><rect x="1735" y="393" width="30" height="6.5"/><rect x="1767" y="393" width="30" height="6.5"/><path d="M1800 393H1813.5V381H1819.5V399C1819.5 400 1818.5 401 1817 401H1800Z"/><rect x="1831" y="393" width="30" height="6.5"/><path d="M1863 393H1872V385L1893 396L1872 408V400H1863Z"/></g><g stroke="#666" fill="none" stroke-width="1.2"><path d="M1727 423H1805M1727 433H1805M1727 428H1805M1714 436V444M1719 436V444M1812 413V419M1817 413V419"/></g><g fill="#666"><ellipse cx="1746" cy="428" rx="4" ry="2"/><ellipse cx="1756" cy="428" rx="2.5" ry="1.5"/><ellipse cx="1778" cy="428" rx="4" ry="2"/><ellipse cx="1788" cy="428" rx="2.5" ry="1.5"/></g><g transform="translate(1715 427)"><rect x="-10" y="-10" width="20" height="20" rx="3" fill="#777"/><path d="M-9 -9L9 9" stroke="#eee" stroke-width="1.5"/><ellipse cx="0" cy="0" rx="8" ry="3" transform="rotate(45)" fill="#555" stroke="#eee" stroke-width="1.2"/><path d="M-8 0C-8 -6 -6 -8 0 -8M8 0C8 6 6 8 0 8" fill="none" stroke="#ddd" stroke-width="1.2"/><circle cx="-6" cy="6" r="2" fill="#eee"/><circle cx="6" cy="-6" r="2" fill="#eee"/></g><g transform="translate(1816 429)"><rect x="-10" y="-10" width="20" height="20" rx="3" fill="#777"/><path d="M-9 -9L9 9" stroke="#eee" stroke-width="1.5"/><ellipse cx="0" cy="0" rx="8" ry="3" transform="rotate(45)" fill="#555" stroke="#eee" stroke-width="1.2"/><path d="M-8 0C-8 -6 -6 -8 0 -8M8 0C8 6 6 8 0 8" fill="none" stroke="#ddd" stroke-width="1.2"/><circle cx="-6" cy="6" r="2" fill="#eee"/><circle cx="6" cy="-6" r="2" fill="#eee"/></g></svg>
<div class="a" style="left:1703px;top:469px;width:195px;height:1px;background:#000;"></div>
<svg class="a" style="left:0;top:0" width="1920" height="1040"><g stroke="#333" fill="#eee"><rect x="1712.5" y="472.5" width="9" height="8"/><rect x="1714.5" y="474.5" width="9" height="8"/><rect x="1716.5" y="476.5" width="9" height="8" fill="#ccc"/></g><path d="M1727 484h-3l3-3z" fill="#111"/>
<path d="M1780 474L1788 483M1788 474L1780 483" stroke="#999" stroke-width="1.2"/>
<path d="M1807 483L1813 474" stroke="#aaa" stroke-width="2"/><path d="M1813 476H1820M1815 479H1822M1813 482H1820" stroke="#aaa"/>
<g transform="translate(1849 473)"><rect x="0.5" y="0.5" width="9" height="10" fill="#fff" stroke="#222"/><rect x="2" y="5" width="4" height="4" fill="#222"/><path d="M4 6L7 9" stroke="#fff" stroke-width="0.8"/></g><g transform="translate(1879 472)"><path d="M1 3H10L9 11H2Z" fill="#fff" stroke="#222" stroke-width="1"/><path d="M0.5 3H10.5" stroke="#222" stroke-width="1.5"/><rect x="3.5" y="0.5" width="4" height="2" fill="none" stroke="#222"/><path d="M4 5V10M5.5 5V10M7 5V10" stroke="#222" stroke-width="0.8"/></g><rect x="1910" y="474" width="1" height="1" fill="#777"/><rect x="1908" y="476" width="1" height="1" fill="#777"/><rect x="1910" y="476" width="1" height="1" fill="#777"/><rect x="1906" y="478" width="1" height="1" fill="#777"/><rect x="1908" y="478" width="1" height="1" fill="#777"/><rect x="1910" y="478" width="1" height="1" fill="#777"/><rect x="1904" y="480" width="1" height="1" fill="#777"/><rect x="1906" y="480" width="1" height="1" fill="#777"/><rect x="1908" y="480" width="1" height="1" fill="#777"/><rect x="1910" y="480" width="1" height="1" fill="#777"/></svg>
<div class="a" style="left:1701px;top:487px;width:214px;height:3px;background:#4a4a4a;"></div>
<div class="a" style="left:1701px;top:490px;width:214px;height:211px;background:#d6d6d6;"></div>
<div class="a" style="left:1701px;top:490px;width:214px;height:16px;background:linear-gradient(#8e8e8e,#9c9c9c 40%,#a2a2a2);"></div>
<div class="a" style="left:1701px;top:490px;width:48px;height:17px;background:linear-gradient(#f0f0f0,#d8d8d8);"></div>
<div class="a" style="left:1749px;top:490px;width:50px;height:16px;background:linear-gradient(#9e9e9e,#8a8a8a);border-right:1px solid #777;border-top:1px solid #aaa"></div>
<div class="a" style="left:1799px;top:490px;width:47px;height:16px;background:linear-gradient(#9e9e9e,#8a8a8a);border-right:1px solid #777;border-top:1px solid #aaa"></div>
<div class="t " style="left:1709px;top:494px;font-size:10px;color:#222;letter-spacing:-0.50px;-webkit-text-stroke:0.35px #222">Ebenen</div>
<div class="t " style="left:1755px;top:494px;font-size:10px;color:#222;letter-spacing:0.24px;-webkit-text-stroke:0.35px #222">Zeichen</div>
<div class="t " style="left:1806px;top:494px;font-size:10px;color:#222;letter-spacing:0.09px;-webkit-text-stroke:0.35px #222">Absatz</div>
<svg class="a" style="left:1897px;top:495px;" width="15" height="8" viewBox="0 0 15 8"><path d="M0 3H4L2 5Z" fill="#222"/><rect x="5" y="0" width="9" height="1" fill="#222"/><rect x="5" y="2" width="9" height="1" fill="#222"/><rect x="5" y="4" width="9" height="1" fill="#222"/><rect x="5" y="6" width="9" height="1" fill="#222"/></svg>
<div class="a" style="left:1703px;top:508px;width:195px;height:1px;background:#000;"></div>
<div class="a" style="left:1898px;top:509px;width:16px;height:175px;background:#ececec;"></div>
<svg class="a" style="left:1901px;top:515px;" width="10" height="6" viewBox="0 0 10 6"><path d="M0 6L5 0.5L10 6Z" fill="#aaa"/></svg>
<svg class="a" style="left:1901px;top:674px;" width="10" height="6" viewBox="0 0 10 6"><path d="M0 0L5 5.5L10 0Z" fill="#aaa"/></svg>
<div class="a" style="left:1703px;top:509px;width:44px;height:20px;background:#cfcfcf;border-bottom:1px solid #b4b4b4;border-top:1px solid #f4f4f4"></div>
<svg class="a" style="left:1707px;top:512px;" width="13" height="14" viewBox="0 0 13 14"><rect x="0" y="0" width="13" height="14" fill="#d4d4d4"/><rect x="0" y="0" width="12" height="1" fill="#a8a8a8"/><rect x="0" y="0" width="1" height="13" fill="#a8a8a8"/><rect x="12" y="0" width="1" height="14" fill="#fff"/><rect x="0" y="13" width="13" height="1" fill="#fff"/><path d="M0.8 5.5C2.5 2 9.5 1.5 11.8 5.5" fill="none" stroke="#000" stroke-width="1.3"/><path d="M1.5 8.5C3 12 9.5 12 11.2 7.5" fill="none" stroke="#000" stroke-width="1.2"/><path d="M1 5.5L1.5 9" stroke="#000" stroke-width="1"/><circle cx="5.8" cy="6.8" r="3.1" fill="#000"/><circle cx="4.8" cy="6" r="0.9" fill="#fff"/></svg>
<svg class="a" style="left:1723px;top:512px;" width="13" height="13" viewBox="0 0 13 13"><rect x="0" y="0" width="13" height="13" fill="#d2d2d2"/><rect x="0" y="0" width="13" height="1" fill="#b0b0b0"/><rect x="0" y="0" width="1" height="13" fill="#b0b0b0"/><rect x="12" y="0" width="1" height="13" fill="#fff"/><rect x="0" y="12" width="13" height="1" fill="#fff"/></svg>
<div class="a" style="left:1739px;top:512px;width:4px;height:13px;background:#1a8a50;"></div>
<div class="a" style="left:1748px;top:509px;width:150px;height:20px;background:#d4d4d4;border-bottom:1px solid #f4f4f4"></div>
<div class="a" style="left:1765px;top:511px;width:16px;height:17px;background:linear-gradient(90deg,#fff 0 2px,#8cc0e8 2px,#6aaada 13px,#fff 13px);border:1.5px solid #111"></div>
<svg class="a" style="left:1751px;top:516px;" width="11" height="7" viewBox="0 0 11 7"><path d="M0.5 0.5H10.5L5.5 6Z" fill="#f4f4f4" stroke="#999"/></svg>
<div class="t " style="left:1785px;top:515px;font-size:10px;color:#1a1a1a;letter-spacing:-0.19px;">Meine Ebene</div>
<svg class="a" style="left:1872px;top:513px;" width="13" height="13" viewBox="0 0 13 13"><circle cx="6.5" cy="6.5" r="4.3" fill="none" stroke="#333" stroke-width="1.1"/></svg>
<div class="a" style="left:1888px;top:515px;width:5px;height:5px;background:#1a8a50;"></div>
<svg class="a" style="left:1888px;top:509px;" width="8" height="6" viewBox="0 0 8 6"><path d="M0 0H8V6Z" fill="#111"/></svg>
<div class="a" style="left:1703px;top:529px;width:44px;height:20px;background:#cfcfcf;border-bottom:1px solid #b4b4b4;border-top:1px solid #f4f4f4"></div>
<svg class="a" style="left:1707px;top:532px;" width="13" height="14" viewBox="0 0 13 14"><rect x="0" y="0" width="13" height="14" fill="#d4d4d4"/><rect x="0" y="0" width="12" height="1" fill="#a8a8a8"/><rect x="0" y="0" width="1" height="13" fill="#a8a8a8"/><rect x="12" y="0" width="1" height="14" fill="#fff"/><rect x="0" y="13" width="13" height="1" fill="#fff"/><path d="M0.8 5.5C2.5 2 9.5 1.5 11.8 5.5" fill="none" stroke="#000" stroke-width="1.3"/><path d="M1.5 8.5C3 12 9.5 12 11.2 7.5" fill="none" stroke="#000" stroke-width="1.2"/><path d="M1 5.5L1.5 9" stroke="#000" stroke-width="1"/><circle cx="5.8" cy="6.8" r="3.1" fill="#000"/><circle cx="4.8" cy="6" r="0.9" fill="#fff"/></svg>
<svg class="a" style="left:1723px;top:532px;" width="13" height="13" viewBox="0 0 13 13"><rect x="0" y="0" width="13" height="13" fill="#d2d2d2"/><rect x="0" y="0" width="13" height="1" fill="#b0b0b0"/><rect x="0" y="0" width="1" height="13" fill="#b0b0b0"/><rect x="12" y="0" width="1" height="13" fill="#fff"/><rect x="0" y="12" width="13" height="1" fill="#fff"/></svg>
<div class="a" style="left:1739px;top:532px;width:4px;height:13px;background:#1a8a50;"></div>
<div class="a" style="left:1748px;top:529px;width:150px;height:20px;background:#fff;"></div>
<div class="a" style="left:1778px;top:548px;width:120px;height:1px;background:#b8b8b8;"></div>
<div class="a" style="left:1780px;top:531px;width:16px;height:17px;background:#fff;border:1.5px solid #111"></div>
<div class="t " style="left:1801px;top:535px;font-size:10px;color:#1a1a1a;letter-spacing:-0.05px;">&lt;Pfad&gt;</div>
<svg class="a" style="left:1872px;top:533px;" width="13" height="13" viewBox="0 0 13 13"><circle cx="6.5" cy="6.5" r="4.3" fill="none" stroke="#333" stroke-width="1.1"/></svg>
<div class="a" style="left:1703px;top:549px;width:44px;height:20px;background:#cfcfcf;border-bottom:1px solid #b4b4b4;border-top:1px solid #f4f4f4"></div>
<svg class="a" style="left:1707px;top:552px;" width="13" height="14" viewBox="0 0 13 14"><rect x="0" y="0" width="13" height="14" fill="#d4d4d4"/><rect x="0" y="0" width="12" height="1" fill="#a8a8a8"/><rect x="0" y="0" width="1" height="13" fill="#a8a8a8"/><rect x="12" y="0" width="1" height="14" fill="#fff"/><rect x="0" y="13" width="13" height="1" fill="#fff"/><path d="M0.8 5.5C2.5 2 9.5 1.5 11.8 5.5" fill="none" stroke="#000" stroke-width="1.3"/><path d="M1.5 8.5C3 12 9.5 12 11.2 7.5" fill="none" stroke="#000" stroke-width="1.2"/><path d="M1 5.5L1.5 9" stroke="#000" stroke-width="1"/><circle cx="5.8" cy="6.8" r="3.1" fill="#000"/><circle cx="4.8" cy="6" r="0.9" fill="#fff"/></svg>
<svg class="a" style="left:1723px;top:552px;" width="13" height="13" viewBox="0 0 13 13"><rect x="0" y="0" width="13" height="13" fill="#d2d2d2"/><rect x="0" y="0" width="13" height="1" fill="#b0b0b0"/><rect x="0" y="0" width="1" height="13" fill="#b0b0b0"/><rect x="12" y="0" width="1" height="13" fill="#fff"/><rect x="0" y="12" width="13" height="1" fill="#fff"/></svg>
<div class="a" style="left:1739px;top:552px;width:4px;height:13px;background:#1a8a50;"></div>
<div class="a" style="left:1748px;top:549px;width:150px;height:20px;background:#fff;"></div>
<div class="a" style="left:1778px;top:568px;width:120px;height:1px;background:#b8b8b8;"></div>
<div class="a" style="left:1780px;top:551px;width:16px;height:17px;background:#fff;border:1.5px solid #111"></div>
<div class="t " style="left:1801px;top:555px;font-size:10px;color:#1a1a1a;letter-spacing:-0.05px;">&lt;Pfad&gt;</div>
<svg class="a" style="left:1872px;top:553px;" width="13" height="13" viewBox="0 0 13 13"><circle cx="6.5" cy="6.5" r="4.3" fill="none" stroke="#333" stroke-width="1.1"/></svg>
<div class="a" style="left:1703px;top:569px;width:44px;height:20px;background:#cfcfcf;border-bottom:1px solid #b4b4b4;border-top:1px solid #f4f4f4"></div>
<svg class="a" style="left:1707px;top:572px;" width="13" height="14" viewBox="0 0 13 14"><rect x="0" y="0" width="13" height="14" fill="#d4d4d4"/><rect x="0" y="0" width="12" height="1" fill="#a8a8a8"/><rect x="0" y="0" width="1" height="13" fill="#a8a8a8"/><rect x="12" y="0" width="1" height="14" fill="#fff"/><rect x="0" y="13" width="13" height="1" fill="#fff"/><path d="M0.8 5.5C2.5 2 9.5 1.5 11.8 5.5" fill="none" stroke="#000" stroke-width="1.3"/><path d="M1.5 8.5C3 12 9.5 12 11.2 7.5" fill="none" stroke="#000" stroke-width="1.2"/><path d="M1 5.5L1.5 9" stroke="#000" stroke-width="1"/><circle cx="5.8" cy="6.8" r="3.1" fill="#000"/><circle cx="4.8" cy="6" r="0.9" fill="#fff"/></svg>
<svg class="a" style="left:1723px;top:572px;" width="13" height="13" viewBox="0 0 13 13"><rect x="0" y="0" width="13" height="13" fill="#d2d2d2"/><rect x="0" y="0" width="13" height="1" fill="#b0b0b0"/><rect x="0" y="0" width="1" height="13" fill="#b0b0b0"/><rect x="12" y="0" width="1" height="13" fill="#fff"/><rect x="0" y="12" width="13" height="1" fill="#fff"/></svg>
<div class="a" style="left:1739px;top:572px;width:4px;height:13px;background:#1a8a50;"></div>
<div class="a" style="left:1748px;top:569px;width:150px;height:20px;background:#fff;"></div>
<div class="a" style="left:1778px;top:588px;width:120px;height:1px;background:#b8b8b8;"></div>
<div class="a" style="left:1780px;top:571px;width:16px;height:17px;background:#fff;border:1.5px solid #111"></div>
<div class="t " style="left:1801px;top:575px;font-size:10px;color:#1a1a1a;letter-spacing:-0.05px;">&lt;Pfad&gt;</div>
<svg class="a" style="left:1872px;top:573px;" width="13" height="13" viewBox="0 0 13 13"><circle cx="6.5" cy="6.5" r="4.3" fill="none" stroke="#333" stroke-width="1.1"/><circle cx="6.5" cy="6.5" r="6" fill="none" stroke="#333" stroke-width="1"/></svg>
<div class="a" style="left:1888px;top:575px;width:8px;height:8px;background:#188048;border:1px solid #0a3a1a"></div>
<div class="a" style="left:1703px;top:589px;width:44px;height:20px;background:#cfcfcf;border-bottom:1px solid #b4b4b4;border-top:1px solid #f4f4f4"></div>
<svg class="a" style="left:1707px;top:592px;" width="13" height="14" viewBox="0 0 13 14"><rect x="0" y="0" width="13" height="14" fill="#d4d4d4"/><rect x="0" y="0" width="12" height="1" fill="#a8a8a8"/><rect x="0" y="0" width="1" height="13" fill="#a8a8a8"/><rect x="12" y="0" width="1" height="14" fill="#fff"/><rect x="0" y="13" width="13" height="1" fill="#fff"/><path d="M0.8 5.5C2.5 2 9.5 1.5 11.8 5.5" fill="none" stroke="#000" stroke-width="1.3"/><path d="M1.5 8.5C3 12 9.5 12 11.2 7.5" fill="none" stroke="#000" stroke-width="1.2"/><path d="M1 5.5L1.5 9" stroke="#000" stroke-width="1"/><circle cx="5.8" cy="6.8" r="3.1" fill="#000"/><circle cx="4.8" cy="6" r="0.9" fill="#fff"/></svg>
<svg class="a" style="left:1723px;top:592px;" width="13" height="13" viewBox="0 0 13 13"><rect x="0" y="0" width="13" height="13" fill="#d2d2d2"/><rect x="0" y="0" width="13" height="1" fill="#b0b0b0"/><rect x="0" y="0" width="1" height="13" fill="#b0b0b0"/><rect x="12" y="0" width="1" height="13" fill="#fff"/><rect x="0" y="12" width="13" height="1" fill="#fff"/><path d="M4 6V4.5C4 2 9 2 9 4.5V6" fill="none" stroke="#222" stroke-width="1.4"/><rect x="2.5" y="6" width="8" height="5.5" fill="#333"/><rect x="3.5" y="7" width="2" height="1" fill="#aaa"/></svg>
<div class="a" style="left:1739px;top:592px;width:4px;height:13px;background:#1a8a50;"></div>
<div class="a" style="left:1748px;top:589px;width:30px;height:20px;background:#fff;"></div>
<div class="a" style="left:1778px;top:589px;width:120px;height:20px;background:#3a96f0;"></div>
<div class="a" style="left:1780px;top:591px;width:16px;height:17px;background:linear-gradient(90deg,#fff 0 2px,#9ccaf0 2px,#6aaada 13px,#fff 13px);border:1.5px solid #111"></div>
<svg class="a" style="left:1767px;top:594px;" width="7" height="11" viewBox="0 0 7 11"><path d="M0.5 0.5V10.5L6 5.5Z" fill="#f4f4f4" stroke="#999"/></svg>
<div class="t " style="left:1801px;top:594px;font-size:10px;color:#fff;font-weight:bold;letter-spacing:0.28px;">Hintergrund</div>
<svg class="a" style="left:1872px;top:593px;" width="13" height="13" viewBox="0 0 13 13"><circle cx="6.5" cy="6.5" r="4.3" fill="none" stroke="#111" stroke-width="1.1"/></svg>
<div class="a" style="left:1703px;top:609px;width:44px;height:20px;background:#cfcfcf;border-bottom:1px solid #b4b4b4;border-top:1px solid #f4f4f4"></div>
<svg class="a" style="left:1707px;top:612px;" width="13" height="14" viewBox="0 0 13 14"><rect x="0" y="0" width="13" height="14" fill="#d4d4d4"/><rect x="0" y="0" width="12" height="1" fill="#a8a8a8"/><rect x="0" y="0" width="1" height="13" fill="#a8a8a8"/><rect x="12" y="0" width="1" height="14" fill="#fff"/><rect x="0" y="13" width="13" height="1" fill="#fff"/><path d="M0.8 5.5C2.5 2 9.5 1.5 11.8 5.5" fill="none" stroke="#000" stroke-width="1.3"/><path d="M1.5 8.5C3 12 9.5 12 11.2 7.5" fill="none" stroke="#000" stroke-width="1.2"/><path d="M1 5.5L1.5 9" stroke="#000" stroke-width="1"/><circle cx="5.8" cy="6.8" r="3.1" fill="#000"/><circle cx="4.8" cy="6" r="0.9" fill="#fff"/></svg>
<svg class="a" style="left:1723px;top:612px;" width="13" height="13" viewBox="0 0 13 13"><rect x="0" y="0" width="13" height="13" fill="#d2d2d2"/><rect x="0" y="0" width="13" height="1" fill="#b0b0b0"/><rect x="0" y="0" width="1" height="13" fill="#b0b0b0"/><rect x="12" y="0" width="1" height="13" fill="#fff"/><rect x="0" y="12" width="13" height="1" fill="#fff"/><path d="M4 6V4.5C4 2 9 2 9 4.5V6" fill="none" stroke="#222" stroke-width="1.4"/><rect x="2.5" y="6" width="8" height="5.5" fill="#333"/><rect x="3.5" y="7" width="2" height="1" fill="#aaa"/></svg>
<div class="a" style="left:1739px;top:612px;width:4px;height:13px;background:#1a8a50;"></div>
<div class="a" style="left:1748px;top:609px;width:150px;height:20px;background:#fff;"></div>
<div class="a" style="left:1778px;top:628px;width:120px;height:1px;background:#b8b8b8;"></div>
<div class="a" style="left:1780px;top:611px;width:16px;height:17px;background:#e0601e;border:1.5px solid #111"></div>
<div class="t " style="left:1801px;top:615px;font-size:10px;color:#1a1a1a;letter-spacing:-0.05px;">&lt;Pfad&gt;</div>
<svg class="a" style="left:1872px;top:613px;" width="13" height="13" viewBox="0 0 13 13"><circle cx="6.5" cy="6.5" r="4.3" fill="none" stroke="#333" stroke-width="1.1"/></svg>
<div class="a" style="left:1703px;top:629px;width:44px;height:20px;background:#cfcfcf;border-bottom:1px solid #b4b4b4;border-top:1px solid #f4f4f4"></div>
<svg class="a" style="left:1707px;top:632px;" width="13" height="14" viewBox="0 0 13 14"><rect x="0" y="0" width="13" height="14" fill="#d4d4d4"/><rect x="0" y="0" width="12" height="1" fill="#a8a8a8"/><rect x="0" y="0" width="1" height="13" fill="#a8a8a8"/><rect x="12" y="0" width="1" height="14" fill="#fff"/><rect x="0" y="13" width="13" height="1" fill="#fff"/><path d="M0.8 5.5C2.5 2 9.5 1.5 11.8 5.5" fill="none" stroke="#000" stroke-width="1.3"/><path d="M1.5 8.5C3 12 9.5 12 11.2 7.5" fill="none" stroke="#000" stroke-width="1.2"/><path d="M1 5.5L1.5 9" stroke="#000" stroke-width="1"/><circle cx="5.8" cy="6.8" r="3.1" fill="#000"/><circle cx="4.8" cy="6" r="0.9" fill="#fff"/></svg>
<svg class="a" style="left:1723px;top:632px;" width="13" height="13" viewBox="0 0 13 13"><rect x="0" y="0" width="13" height="13" fill="#d2d2d2"/><rect x="0" y="0" width="13" height="1" fill="#b0b0b0"/><rect x="0" y="0" width="1" height="13" fill="#b0b0b0"/><rect x="12" y="0" width="1" height="13" fill="#fff"/><rect x="0" y="12" width="13" height="1" fill="#fff"/><path d="M4 6V4.5C4 2 9 2 9 4.5V6" fill="none" stroke="#222" stroke-width="1.4"/><rect x="2.5" y="6" width="8" height="5.5" fill="#333"/><rect x="3.5" y="7" width="2" height="1" fill="#aaa"/></svg>
<div class="a" style="left:1739px;top:632px;width:4px;height:13px;background:#f06010;"></div>
<div class="a" style="left:1748px;top:629px;width:150px;height:20px;background:#d4d4d4;border-bottom:1px solid #f4f4f4"></div>
<div class="a" style="left:1765px;top:631px;width:16px;height:17px;background:#fff;border:1.5px solid #111"></div>
<svg class="a" style="left:1751px;top:634px;" width="7" height="11" viewBox="0 0 7 11"><path d="M0.5 0.5V10.5L6 5.5Z" fill="#f4f4f4" stroke="#999"/></svg>
<div class="t " style="left:1785px;top:635px;font-size:10px;color:#1a1a1a;letter-spacing:-0.02px;">Vorlage Vorderseite</div>
<svg class="a" style="left:1872px;top:633px;" width="13" height="13" viewBox="0 0 13 13"><circle cx="6.5" cy="6.5" r="4.3" fill="none" stroke="#333" stroke-width="1.1"/></svg>
<div class="a" style="left:1703px;top:649px;width:44px;height:20px;background:#cfcfcf;border-bottom:1px solid #b4b4b4;border-top:1px solid #f4f4f4"></div>
<svg class="a" style="left:1707px;top:652px;" width="13" height="14" viewBox="0 0 13 14"><rect x="0" y="0" width="13" height="14" fill="#d4d4d4"/><rect x="0" y="0" width="12" height="1" fill="#a8a8a8"/><rect x="0" y="0" width="1" height="13" fill="#a8a8a8"/><rect x="12" y="0" width="1" height="14" fill="#fff"/><rect x="0" y="13" width="13" height="1" fill="#fff"/><path d="M0.8 5.5C2.5 2 9.5 1.5 11.8 5.5" fill="none" stroke="#000" stroke-width="1.3"/><path d="M1.5 8.5C3 12 9.5 12 11.2 7.5" fill="none" stroke="#000" stroke-width="1.2"/><path d="M1 5.5L1.5 9" stroke="#000" stroke-width="1"/><circle cx="5.8" cy="6.8" r="3.1" fill="#000"/><circle cx="4.8" cy="6" r="0.9" fill="#fff"/></svg>
<svg class="a" style="left:1723px;top:652px;" width="13" height="13" viewBox="0 0 13 13"><rect x="0" y="0" width="13" height="13" fill="#d2d2d2"/><rect x="0" y="0" width="13" height="1" fill="#b0b0b0"/><rect x="0" y="0" width="1" height="13" fill="#b0b0b0"/><rect x="12" y="0" width="1" height="13" fill="#fff"/><rect x="0" y="12" width="13" height="1" fill="#fff"/><path d="M4 6V4.5C4 2 9 2 9 4.5V6" fill="none" stroke="#222" stroke-width="1.4"/><rect x="2.5" y="6" width="8" height="5.5" fill="#333"/><rect x="3.5" y="7" width="2" height="1" fill="#aaa"/></svg>
<div class="a" style="left:1739px;top:652px;width:4px;height:13px;background:#f06010;"></div>
<div class="a" style="left:1748px;top:649px;width:150px;height:20px;background:#d4d4d4;border-bottom:1px solid #f4f4f4"></div>
<div class="a" style="left:1765px;top:651px;width:16px;height:17px;background:#fff;border:1.5px solid #111"></div>
<svg class="a" style="left:1751px;top:654px;" width="7" height="11" viewBox="0 0 7 11"><path d="M0.5 0.5V10.5L6 5.5Z" fill="#f4f4f4" stroke="#999"/></svg>
<div class="t " style="left:1785px;top:655px;font-size:10px;color:#1a1a1a;letter-spacing:-0.29px;">Vorlage Rückseite</div>
<svg class="a" style="left:1872px;top:653px;" width="13" height="13" viewBox="0 0 13 13"><circle cx="6.5" cy="6.5" r="4.3" fill="none" stroke="#333" stroke-width="1.1"/></svg>
<div class="a" style="left:1747px;top:509px;width:1px;height:160px;background:#111;"></div>
<div class="a" style="left:1703px;top:668px;width:195px;height:1px;background:#000;"></div>
<div class="a" style="left:1703px;top:683px;width:195px;height:1px;background:#000;"></div>
<div class="t " style="left:1712px;top:688px;font-size:10px;color:#222;letter-spacing:-0.54px;">3 Ebenen</div>
<svg class="a" style="left:0;top:0" width="1920" height="1040"><rect x="1782.5" y="686.5" width="8" height="6" fill="#fff" stroke="#aaa"/><circle cx="1790" cy="692" r="4.5" fill="#fff" stroke="#222" stroke-width="1.2"/><path d="M1790 692V688A4 4 0 0 0 1786 692Z" fill="#222"/>
<path d="M1812 691H1817M1815 689L1817 691L1815 693" stroke="#333" fill="none"/><rect x="1819.5" y="687.5" width="7" height="8" fill="#fff" stroke="#333"/>
<g transform="translate(1846 686)"><rect x="0.5" y="0.5" width="9" height="10" fill="#fff" stroke="#222"/><rect x="2" y="5" width="4" height="4" fill="#222"/><path d="M4 6L7 9" stroke="#fff" stroke-width="0.8"/></g><g transform="translate(1878 685)"><path d="M1 3H10L9 11H2Z" fill="#fff" stroke="#222" stroke-width="1"/><path d="M0.5 3H10.5" stroke="#222" stroke-width="1.5"/><rect x="3.5" y="0.5" width="4" height="2" fill="none" stroke="#222"/><path d="M4 5V10M5.5 5V10M7 5V10" stroke="#222" stroke-width="0.8"/></g><rect x="1910" y="689" width="1" height="1" fill="#777"/><rect x="1908" y="691" width="1" height="1" fill="#777"/><rect x="1910" y="691" width="1" height="1" fill="#777"/><rect x="1906" y="693" width="1" height="1" fill="#777"/><rect x="1908" y="693" width="1" height="1" fill="#777"/><rect x="1910" y="693" width="1" height="1" fill="#777"/><rect x="1904" y="695" width="1" height="1" fill="#777"/><rect x="1906" y="695" width="1" height="1" fill="#777"/><rect x="1908" y="695" width="1" height="1" fill="#777"/><rect x="1910" y="695" width="1" height="1" fill="#777"/></svg>
<div class="a" style="left:1701px;top:701px;width:214px;height:3px;background:#4a4a4a;"></div>
<div class="a" style="left:1701px;top:704px;width:214px;height:189px;background:#d6d6d6;"></div>
<div class="a" style="left:1701px;top:704px;width:214px;height:16px;background:linear-gradient(#8e8e8e,#9c9c9c 40%,#a2a2a2);"></div>
<div class="a" style="left:1701px;top:704px;width:59px;height:17px;background:linear-gradient(#f0f0f0,#d8d8d8);"></div>
<div class="a" style="left:1760px;top:704px;width:49px;height:16px;background:linear-gradient(#9e9e9e,#8a8a8a);border-right:1px solid #777;border-top:1px solid #aaa"></div>
<div class="a" style="left:1809px;top:704px;width:67px;height:16px;background:linear-gradient(#9e9e9e,#8a8a8a);border-right:1px solid #777;border-top:1px solid #aaa"></div>
<div class="t " style="left:1709px;top:708px;font-size:10px;color:#222;letter-spacing:-0.35px;-webkit-text-stroke:0.35px #222">Aussehen</div>
<div class="t " style="left:1767px;top:708px;font-size:10px;color:#222;letter-spacing:0.48px;-webkit-text-stroke:0.35px #222">Verlauf</div>
<div class="t " style="left:1816px;top:708px;font-size:10px;color:#222;letter-spacing:-0.08px;-webkit-text-stroke:0.35px #222">Transparenz</div>
<svg class="a" style="left:1897px;top:709px;" width="15" height="8" viewBox="0 0 15 8"><path d="M0 3H4L2 5Z" fill="#222"/><rect x="5" y="0" width="9" height="1" fill="#222"/><rect x="5" y="2" width="9" height="1" fill="#222"/><rect x="5" y="4" width="9" height="1" fill="#222"/><rect x="5" y="6" width="9" height="1" fill="#222"/></svg>
<div class="a" style="left:1703px;top:721px;width:195px;height:1px;background:#000;"></div>
<div class="a" style="left:1898px;top:722px;width:16px;height:154px;background:#ececec;"></div>
<svg class="a" style="left:1901px;top:729px;" width="10" height="6" viewBox="0 0 10 6"><path d="M0 6L5 0.5L10 6Z" fill="#aaa"/></svg>
<svg class="a" style="left:1901px;top:866px;" width="10" height="6" viewBox="0 0 10 6"><path d="M0 0L5 5.5L10 0Z" fill="#aaa"/></svg>
<div class="a" style="left:1705px;top:725px;width:20px;height:20px;background:#fff;border:1.2px solid #111"></div>
<div class="t " style="left:1738px;top:731px;font-size:10px;color:#111;font-weight:bold;letter-spacing:0.11px;">Pfad</div>
<div class="a" style="left:1703px;top:746px;width:195px;height:1px;background:#000;"></div>
<div class="a" style="left:1725px;top:770px;width:173px;height:1px;background:#f4f4f4;"></div>
<div class="a" style="left:1707px;top:750px;width:13px;height:18px;background:#d2d2d2;border-top:1px solid #b0b0b0;border-left:1px solid #b0b0b0;border-right:1px solid #fff;border-bottom:1px solid #fff"></div>
<svg class="a" style="left:1707px;top:752px;" width="13" height="14" viewBox="0 0 13 14"><path d="M0.8 5.5C2.5 2 9.5 1.5 11.8 5.5" fill="none" stroke="#000" stroke-width="1.3"/><path d="M1.5 8.5C3 12 9.5 12 11.2 7.5" fill="none" stroke="#000" stroke-width="1.2"/><path d="M1 5.5L1.5 9" stroke="#000" stroke-width="1"/><circle cx="5.8" cy="6.8" r="3.1" fill="#000"/><circle cx="4.8" cy="6" r="0.9" fill="#fff"/></svg>
<div class="a" style="left:1725px;top:795px;width:173px;height:1px;background:#f4f4f4;"></div>
<div class="a" style="left:1707px;top:775px;width:13px;height:18px;background:#d2d2d2;border-top:1px solid #b0b0b0;border-left:1px solid #b0b0b0;border-right:1px solid #fff;border-bottom:1px solid #fff"></div>
<svg class="a" style="left:1707px;top:777px;" width="13" height="14" viewBox="0 0 13 14"><path d="M0.8 5.5C2.5 2 9.5 1.5 11.8 5.5" fill="none" stroke="#000" stroke-width="1.3"/><path d="M1.5 8.5C3 12 9.5 12 11.2 7.5" fill="none" stroke="#000" stroke-width="1.2"/><path d="M1 5.5L1.5 9" stroke="#000" stroke-width="1"/><circle cx="5.8" cy="6.8" r="3.1" fill="#000"/><circle cx="4.8" cy="6" r="0.9" fill="#fff"/></svg>
<div class="a" style="left:1725px;top:819px;width:173px;height:1px;background:#f4f4f4;"></div>
<div class="a" style="left:1707px;top:799px;width:13px;height:18px;background:#d2d2d2;border-top:1px solid #b0b0b0;border-left:1px solid #b0b0b0;border-right:1px solid #fff;border-bottom:1px solid #fff"></div>
<svg class="a" style="left:1707px;top:801px;" width="13" height="14" viewBox="0 0 13 14"><path d="M0.8 5.5C2.5 2 9.5 1.5 11.8 5.5" fill="none" stroke="#999" stroke-width="1.3"/><path d="M1.5 8.5C3 12 9.5 12 11.2 7.5" fill="none" stroke="#999" stroke-width="1.2"/><path d="M1 5.5L1.5 9" stroke="#999" stroke-width="1"/><circle cx="5.8" cy="6.8" r="3.1" fill="#999"/><circle cx="4.8" cy="6" r="0.9" fill="#fff"/></svg>
<div class="a" style="left:1724px;top:747px;width:1px;height:72px;background:#111;"></div>
<svg class="a" style="left:1727px;top:754px;" width="7" height="12" viewBox="0 0 7 12"><path d="M1 1V11L6 6Z" fill="none" stroke="#111" stroke-width="1.4"/></svg>
<svg class="a" style="left:1727px;top:779px;" width="7" height="12" viewBox="0 0 7 12"><path d="M1 1V11L6 6Z" fill="none" stroke="#111" stroke-width="1.4"/></svg>
<div class="t " style="left:1738px;top:755px;font-size:10px;color:#2020d0;letter-spacing:0.29px;">Kontur:</div>
<div class="a" style="left:1738px;top:765px;width:35px;height:1px;background:transparent;border-bottom:1px dotted #2020d0"></div>
<svg class="a" style="left:1783px;top:750px;" width="18" height="18" viewBox="0 0 18 18"><rect x="0.75" y="0.75" width="16.5" height="16.5" fill="#fff" stroke="#111" stroke-width="1.5"/><rect x="2.5" y="2.5" width="13" height="13" fill="none" stroke="#111"/><path d="M3 15L15 3" stroke="#c0103a" stroke-width="1.8"/></svg>
<div class="t " style="left:1738px;top:779px;font-size:10px;color:#111;letter-spacing:-0.13px;">Fläche:</div>
<svg class="a" style="left:1783px;top:774px;" width="18" height="18" viewBox="0 0 18 18"><rect x="0.75" y="0.75" width="16.5" height="16.5" fill="#fff" stroke="#111" stroke-width="1.5"/><rect x="2.5" y="2.5" width="13" height="13" fill="none" stroke="#111"/></svg>
<div class="t " style="left:1738px;top:803px;font-size:10px;color:#2020d0;letter-spacing:0.22px;">Deckkraft:</div>
<div class="a" style="left:1738px;top:813px;width:48px;height:1px;background:transparent;border-bottom:1px dotted #2020d0"></div>
<div class="t " style="left:1792px;top:803px;font-size:10px;color:#111;letter-spacing:-0.08px;">Standard</div>
<div class="a" style="left:1703px;top:818px;width:195px;height:1px;background:#000;"></div>
<div class="a" style="left:1703px;top:875px;width:195px;height:1px;background:#000;"></div>
<svg class="a" style="left:0;top:0" width="1920" height="1040"><rect x="1713.5" y="878.5" width="10" height="10" fill="#444" stroke="#333"/><rect x="1716" y="881" width="5" height="5" fill="#999"/>
<rect x="1748.5" y="878.5" width="10" height="10" fill="#fafafa" stroke="#333"/>
<text x="1781" y="889" font-family="Liberation Serif" font-style="italic" font-weight="bold" font-size="13" fill="#333">fx</text><path d="M1797 890h-3l3-3z" fill="#111"/>
<circle cx="1818.5" cy="883.5" r="4.5" fill="none" stroke="#222" stroke-width="1.4"/><path d="M1815.5 880.5L1821.5 886.5" stroke="#222" stroke-width="1.4"/>
<g transform="translate(1848 878)"><rect x="0.5" y="0.5" width="9" height="10" fill="#fff" stroke="#aaa"/><rect x="2" y="5" width="4" height="4" fill="#aaa"/><path d="M4 6L7 9" stroke="#fff" stroke-width="0.8"/></g><g transform="translate(1878 877)"><path d="M1 3H10L9 11H2Z" fill="#eee" stroke="#999" stroke-width="1"/><path d="M0.5 3H10.5" stroke="#999" stroke-width="1.5"/><rect x="3.5" y="0.5" width="4" height="2" fill="none" stroke="#999"/><path d="M4 5V10M5.5 5V10M7 5V10" stroke="#999" stroke-width="0.8"/></g></svg>
<div class="a" style="left:1701px;top:892px;width:214px;height:4px;background:#4a4a4a;"></div>
<div class="a" style="left:1701px;top:896px;width:214px;height:138px;background:#d6d6d6;"></div>
<div class="a" style="left:1701px;top:896px;width:214px;height:16px;background:linear-gradient(#8e8e8e,#9c9c9c 40%,#a2a2a2);"></div>
<div class="a" style="left:1701px;top:896px;width:74px;height:17px;background:linear-gradient(#f0f0f0,#d8d8d8);"></div>
<div class="a" style="left:1775px;top:896px;width:64px;height:16px;background:linear-gradient(#9e9e9e,#8a8a8a);border-right:1px solid #777;border-top:1px solid #aaa"></div>
<svg class="a" style="left:1704px;top:901px;" width="6" height="9" viewBox="0 0 6 9"><path d="M0.5 3.5L3 1L5.5 3.5M0.5 5.5L3 8L5.5 5.5" fill="none" stroke="#222" stroke-width="1.2"/></svg>
<div class="t " style="left:1713px;top:900px;font-size:10px;color:#222;letter-spacing:0.20px;-webkit-text-stroke:0.35px #222">Ausrichten</div>
<div class="t " style="left:1783px;top:900px;font-size:10px;color:#222;letter-spacing:0.16px;-webkit-text-stroke:0.35px #222">Pathfinder</div>
<svg class="a" style="left:1897px;top:901px;" width="15" height="8" viewBox="0 0 15 8"><path d="M0 3H4L2 5Z" fill="#222"/><rect x="5" y="0" width="9" height="1" fill="#222"/><rect x="5" y="2" width="9" height="1" fill="#222"/><rect x="5" y="4" width="9" height="1" fill="#222"/><rect x="5" y="6" width="9" height="1" fill="#222"/></svg>
<div class="t " style="left:1707px;top:920px;font-size:10px;color:#1a1a1a;letter-spacing:0.19px;">Ankerpunkte ausrichten:</div>
<div class="t " style="left:1707px;top:958px;font-size:10px;color:#1a1a1a;letter-spacing:0.21px;">Ankerpunkte verteilen:</div>
<div class="t " style="left:1707px;top:996px;font-size:10px;color:#1a1a1a;letter-spacing:0.06px;">Abstand verteilen:</div>
<div class="t " style="left:1841px;top:998px;font-size:10px;color:#1a1a1a;letter-spacing:0.08px;">Ausrichten an:</div>
<div class="a" style="left:1707px;top:952px;width:203px;height:1px;background:#b8b8b8;"></div>
<div class="a" style="left:1707px;top:953px;width:203px;height:1px;background:#f4f4f4;"></div>
<div class="a" style="left:1707px;top:990px;width:203px;height:1px;background:#b8b8b8;"></div>
<div class="a" style="left:1707px;top:991px;width:203px;height:1px;background:#f4f4f4;"></div>
<div class="a" style="left:1835px;top:997px;width:1px;height:28px;background:#b8b8b8;"></div>
<div class="a" style="left:1836px;top:997px;width:1px;height:28px;background:#f4f4f4;"></div>
<svg class="a" style="left:0;top:0" width="1920" height="1040"><defs><linearGradient id="ab" x1="0" y1="0" x2="0" y2="1"><stop offset="0" stop-color="#fafafa"/><stop offset="1" stop-color="#999"/></linearGradient></defs><path d="M1713.5 932V946" stroke="#111"/><rect x="1715.5" y="934.5" width="6" height="4" fill="url(#ab)" stroke="#222" stroke-width="1"/><rect x="1715.5" y="940.5" width="11" height="4" fill="url(#ab)" stroke="#222" stroke-width="1"/><path d="M1754.5 932V946" stroke="#111"/><rect x="1751.5" y="934.5" width="6" height="4" fill="url(#ab)" stroke="#222" stroke-width="1"/><rect x="1748.5" y="940.5" width="12" height="4" fill="url(#ab)" stroke="#222" stroke-width="1"/><path d="M1795.5 932V946" stroke="#111"/><rect x="1787.5" y="934.5" width="6" height="4" fill="url(#ab)" stroke="#222" stroke-width="1"/><rect x="1782.5" y="940.5" width="11" height="4" fill="url(#ab)" stroke="#222" stroke-width="1"/><path d="M1814 933.5H1830" stroke="#111"/><rect x="1816.5" y="935.5" width="4" height="10" fill="url(#ab)" stroke="#222" stroke-width="1"/><rect x="1822.5" y="935.5" width="4" height="5" fill="url(#ab)" stroke="#222" stroke-width="1"/><path d="M1849 939.5H1865" stroke="#111"/><rect x="1852.5" y="934.5" width="4" height="10" fill="url(#ab)" stroke="#222" stroke-width="1"/><rect x="1858.5" y="937.5" width="4" height="4" fill="url(#ab)" stroke="#222" stroke-width="1"/><path d="M1883 945.5H1899" stroke="#111"/><rect x="1885.5" y="933.5" width="4" height="10" fill="url(#ab)" stroke="#222" stroke-width="1"/><rect x="1891.5" y="938.5" width="4" height="5" fill="url(#ab)" stroke="#222" stroke-width="1"/><path d="M1712 970.5H1728M1712 977.5H1728" stroke="#111"/><rect x="1717.5" y="971.5" width="6" height="3" fill="url(#ab)" stroke="#222" stroke-width="1"/><rect x="1715.5" y="978.5" width="10" height="4" fill="url(#ab)" stroke="#222" stroke-width="1"/><path d="M1746 972.5H1762M1746 979.5H1762" stroke="#111"/><rect x="1751.5" y="971.5" width="6" height="3" fill="url(#ab)" stroke="#222" stroke-width="1"/><rect x="1749.5" y="978.5" width="10" height="4" fill="url(#ab)" stroke="#222" stroke-width="1"/><path d="M1780 975.5H1796M1780 983.5H1796" stroke="#111"/><rect x="1785.5" y="971.5" width="6" height="3" fill="url(#ab)" stroke="#222" stroke-width="1"/><rect x="1783.5" y="978.5" width="10" height="4" fill="url(#ab)" stroke="#222" stroke-width="1"/><path d="M1815.5 970V984M1822.5 970V984" stroke="#111"/><rect x="1816.5" y="973.5" width="3" height="9" fill="url(#ab)" stroke="#222" stroke-width="1"/><rect x="1823.5" y="974.5" width="4" height="5" fill="url(#ab)" stroke="#222" stroke-width="1"/><path d="M1852.5 970V984M1860.5 970V984" stroke="#111"/><rect x="1851.5" y="973.5" width="3" height="9" fill="url(#ab)" stroke="#222" stroke-width="1"/><rect x="1858.5" y="974.5" width="4" height="5" fill="url(#ab)" stroke="#222" stroke-width="1"/><path d="M1890.5 970V984M1897.5 970V984" stroke="#111"/><rect x="1885.5" y="973.5" width="3" height="9" fill="url(#ab)" stroke="#222" stroke-width="1"/><rect x="1892.5" y="974.5" width="4" height="5" fill="url(#ab)" stroke="#222" stroke-width="1"/><rect x="1717.5" y="1010.5" width="6" height="4" fill="url(#ab)" stroke="#222" stroke-width="1"/><path d="M1712 1016.5H1730M1712 1018.5H1730" stroke="#333"/><rect x="1718.5" y="1021.5" width="4" height="3" fill="url(#ab)" stroke="#222" stroke-width="1"/><rect x="1746.5" y="1011.5" width="3" height="4" fill="url(#ab)" stroke="#222" stroke-width="1"/><path d="M1752.5 1010V1024M1754.5 1010V1024" stroke="#333"/><rect x="1757.5" y="1013.5" width="4" height="10" fill="url(#ab)" stroke="#222" stroke-width="1"/><rect x="1777.5" y="1009.5" width="52" height="18" fill="#e0e0e0" stroke="#f8f8f8"/><rect x="1779.5" y="1011.5" width="12" height="14" fill="#e8e8e8" stroke="#fafafa"/><path d="M1783 1016L1785.5 1013.5L1788 1016M1783 1021L1785.5 1023.5L1788 1021" fill="none" stroke="#aaa"/><rect x="1862.5" y="1010.5" width="12" height="13" fill="#eee" stroke="#222" stroke-width="1.2"/><rect x="1866.5" y="1012.5" width="4" height="9" fill="url(#ab)" stroke="#222" stroke-width="1"/><path d="M1865 1012H1872M1865 1022H1872" stroke="#222"/><path d="M1877 1015H1883L1880 1020Z" fill="#111"/></svg>
<div class="a" style="left:1701px;top:1034px;width:214px;height:1px;background:#4a4a4a;"></div>
</body></html>
